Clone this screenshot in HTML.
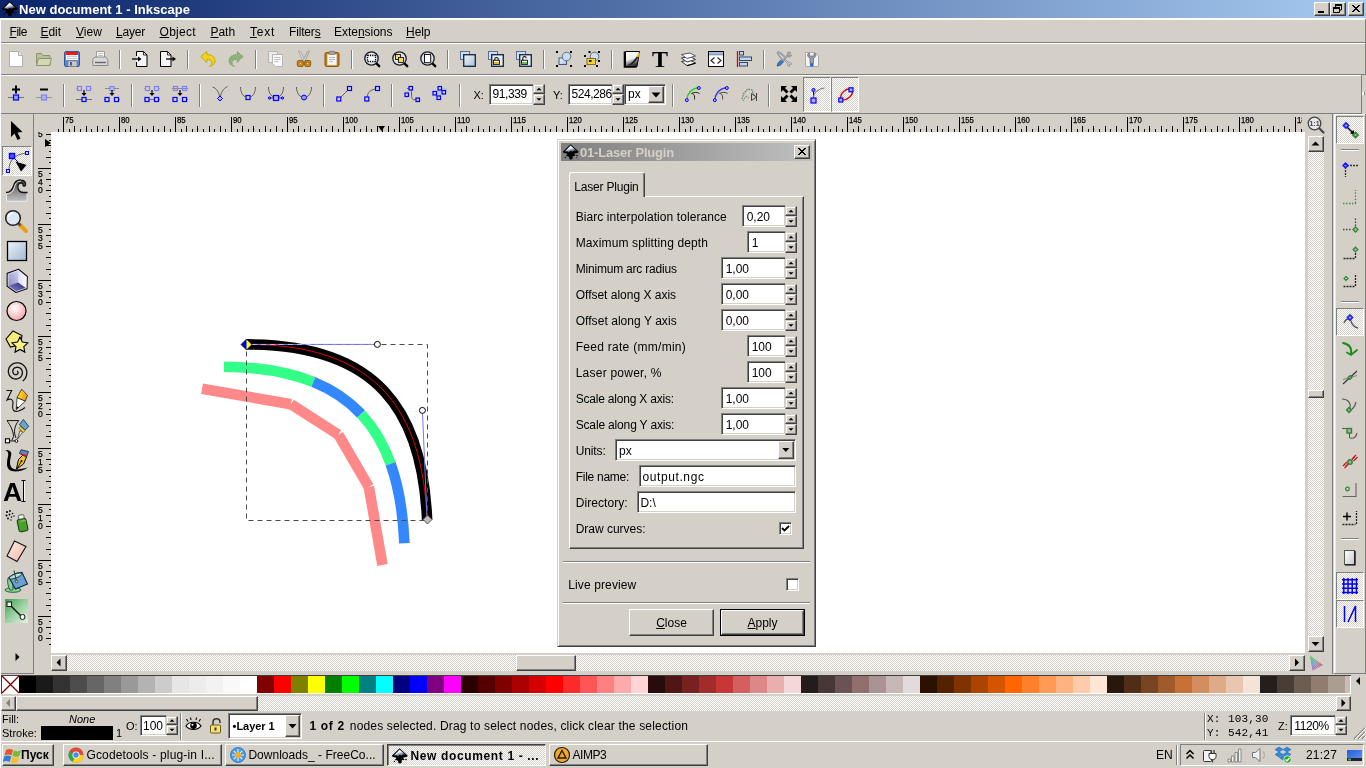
<!DOCTYPE html><html><head><meta charset="utf-8"><title>New document 1 - Inkscape</title><style>
html,body{margin:0;padding:0;}
body{width:1366px;height:768px;overflow:hidden;background:#d4d0c8;position:relative;font-family:"Liberation Sans",sans-serif;font-size:12px;color:#000;}
.a{position:absolute;}
.t{position:absolute;white-space:nowrap;line-height:14px;}
u{text-decoration:underline;}
.sunk{position:absolute;background:#fff;box-sizing:border-box;border:1px solid;border-color:#808080 #fff #fff #808080;box-shadow:inset 1px 1px 0 #404040, inset -1px -1px 0 #d4d0c8;}
.btn{position:absolute;background:#d4d0c8;box-sizing:border-box;border:1px solid;border-color:#fff #404040 #404040 #fff;box-shadow:inset -1px -1px 0 #808080, inset 1px 1px 0 #d4d0c8;}
.btn2{position:absolute;background:#d4d0c8;box-sizing:border-box;border:1px solid;border-color:#d4d0c8 #404040 #404040 #d4d0c8;box-shadow:inset -1px -1px 0 #808080, inset 1px 1px 0 #fff;}
.chk{background-color:#d4d0c8;background-image:conic-gradient(#fff 25%,#d4d0c8 0 50%,#fff 0 75%,#d4d0c8 0);background-size:2px 2px;}
.hsep{position:absolute;left:0;width:1366px;height:1px;}
.vsep{position:absolute;width:2px;border-left:1px solid #808080;border-right:1px solid #fff;box-sizing:border-box;}
svg{position:absolute;overflow:visible;}
</style></head><body><div id="w" style="position:absolute;left:0;top:0;width:1366px;height:768px;will-change:transform">
<svg width="0" height="0" style="left:0;top:0"><defs><linearGradient id="dg" x1="0" y1="0" x2="1" y2="1"><stop offset="0" stop-color="#f2f6fb"/><stop offset="1" stop-color="#a9c0dc"/></linearGradient><linearGradient id="ilg" x1=".2" y1="0" x2=".7" y2="1"><stop offset="0" stop-color="#fff"/><stop offset=".45" stop-color="#e8eef6"/><stop offset=".8" stop-color="#5a6b86"/><stop offset="1" stop-color="#111"/></linearGradient></defs></svg>
<div class="a" style="left:0px;top:0px;width:1366px;height:18px;background:linear-gradient(90deg,#0a246a,#a6caf0);"></div>
<div class="a" style="left:0px;top:18px;width:1366px;height:2px;background:#fff;"></div>
<div class="a" style="left:0px;top:18px;width:1px;height:750px;background:#fff;"></div>
<div class="a" style="left:1365px;top:19px;width:1px;height:56px;background:#808080;"></div>
<div class="a" style="left:1365px;top:114px;width:1px;height:560px;background:#808080;"></div>
<svg style="left:2px;top:1px" width="16" height="16" viewBox="0 0 16 16"><path d="M7.600 .2L15.600 7.600Q15.800 8.700 14.300 9L11.600 9.600Q10.800 10.300 11.800 10.800L12.500 11.300Q12.300 12.100 11 12L9.800 12.300Q9 13 10 13.700Q9.300 15.600 7.600 15.600Q5.800 15.400 6.200 13.800Q6.600 12.800 5.400 12.600L3.400 12Q2.600 11.300 4 10.800Q4.800 10.200 3.800 9.600L1.200 9Q-.3 8.700 0 7.600Z" fill="#000"/><path d="M7.600 1.400L14 7.200L11.400 6.600L9.600 8L7.800 6.800L5.800 8.200L4.200 7.200L1.800 7.600Z" fill="url(#ilg)"/><circle cx="14" cy="11.500" r=".8" fill="#000"/><circle cx="2.400" cy="13.400" r=".7" fill="#000"/><circle cx="13.500" cy="13.800" r=".5" fill="#000"/></svg>
<div class="t" style="left:19px;top:2px;font-weight:bold;font-size:13px;color:#fff;letter-spacing:0.02px;line-height:15px">New document 1 - Inkscape</div>
<div class="btn" style="left:1314px;top:2px;width:16px;height:14px;"></div>
<div class="a" style="left:1318px;top:11px;width:6px;height:2px;background:#000;"></div>
<div class="btn" style="left:1330px;top:2px;width:16px;height:14px;"></div>
<svg style="left:1330px;top:2px" width="16" height="14" viewBox="0 0 16 14"><path d="M5.5 2.5h6v1h-6zM5.5 2.5v3M11.5 2.5v5.5h-2" fill="none" stroke="#000" stroke-width="1"/><path d="M5 2h7v2H5z" fill="#000"/><path d="M3.5 6.5h6v4h-6z" fill="none" stroke="#000"/><path d="M3 5h7v2H3z" fill="#000"/></svg>
<div class="btn" style="left:1348px;top:2px;width:16px;height:14px;"></div>
<svg style="left:1348px;top:2px" width="16" height="14" viewBox="0 0 16 14"><path d="M4 3l7 7M5 3l7 7M11 3l-7 7M12 3l-7 7" stroke="#000" stroke-width="1" fill="none"/></svg>
<div class="t" style="left:9.5px;top:25px;font-size:12px;letter-spacing:-0.459px;"><u>F</u>ile</div>
<div class="t" style="left:40.5px;top:25px;font-size:12px;letter-spacing:-0.045px;"><u>E</u>dit</div>
<div class="t" style="left:76px;top:25px;font-size:12px;letter-spacing:0.052px;"><u>V</u>iew</div>
<div class="t" style="left:116px;top:25px;font-size:12px;letter-spacing:-0.203px;"><u>L</u>ayer</div>
<div class="t" style="left:159.5px;top:25px;font-size:12px;letter-spacing:0.303px;"><u>O</u>bject</div>
<div class="t" style="left:210.5px;top:25px;font-size:12px;letter-spacing:-0.046px;"><u>P</u>ath</div>
<div class="t" style="left:250px;top:25px;font-size:12px;letter-spacing:0.748px;"><u>T</u>ext</div>
<div class="t" style="left:289px;top:25px;font-size:12px;letter-spacing:-0.167px;">Filter<u>s</u></div>
<div class="t" style="left:334px;top:25px;font-size:12px;letter-spacing:-0.020px;">Exte<u>n</u>sions</div>
<div class="t" style="left:406px;top:25px;font-size:12px;letter-spacing:-0.045px;"><u>H</u>elp</div>
<div class="a" style="left:1px;top:42px;width:1364px;height:1px;background:#808080;"></div>
<div class="a" style="left:1px;top:43px;width:1364px;height:1px;background:#fff;"></div>
<div class="a" style="left:1px;top:74px;width:1364px;height:1px;background:#808080;"></div>
<div class="a" style="left:1px;top:75px;width:1360px;height:1px;background:#fff;"></div>
<div class="a" style="left:1px;top:113px;width:1361px;height:1px;background:#808080;"></div>
<svg style="left:8px;top:51px" width="16" height="16" viewBox="0 0 16 16"><path d="M1.5 .5h9l4 4v11h-13z" fill="#fff" stroke="#b0b0b0"/><path d="M10.5 .5v4h4" fill="#eee" stroke="#b0b0b0"/></svg>
<svg style="left:36px;top:51px" width="16" height="16" viewBox="0 0 16 16"><path d="M.5 14.5v-12h5l1.5 2h7v10z" fill="#b9bf96" stroke="#8e9470"/><path d="M.5 14.5l2-7h13l-2 7z" fill="#d3d8b4" stroke="#8e9470"/></svg>
<svg style="left:64px;top:51px" width="16" height="16" viewBox="0 0 16 16"><rect x=".5" y=".5" width="15" height="15" rx="1.5" fill="#5b8bd6" stroke="#2c5aa0"/><rect x="2" y="1" width="12" height="3" fill="#e41f1f"/><rect x="2" y="4" width="12" height="5" fill="#f4f4f4"/><path d="M3 5.5h10M3 7.5h10" stroke="#ccc"/><rect x="4" y="10" width="9" height="5.5" fill="#c9c9c9" stroke="#777" stroke-width=".6"/><rect x="6" y="11" width="2" height="3.5" fill="#3a5f9e"/></svg>
<svg style="left:92px;top:51px" width="16" height="16" viewBox="0 0 16 16"><path d="M4.5 6.5v-6h8v6" fill="#fff" stroke="#999"/><path d="M6 2.5h5M6 4.500h5" stroke="#bbb"/><path d="M.8 14.500v-6l2-2.500h11l2 2.500v6z" fill="#d9d9d9" stroke="#8a8a8a"/><path d="M3 11.500h11" stroke="#666" stroke-width="1.4"/></svg>
<div class="a" style="left:119px;top:50px;width:1px;height:19px;background:#808080;"></div>
<div class="a" style="left:120px;top:50px;width:1px;height:19px;background:#fff;"></div>
<svg style="left:132px;top:51px" width="16" height="16" viewBox="0 0 16 16"><path d="M4.500 .5h7l3.500 3.500v11.500h-10.500z" fill="#f4f4f4"/><path d="M4.500 5v-4.500h7l3.500 3.500v11.500h-10.500v-4.500" fill="none" stroke="#000"/><path d="M11.500 .5v3.500h3.500" fill="none" stroke="#000" stroke-width=".8"/><path d="M0 8h7" stroke="#000" stroke-width="1.3"/><path d="M6 5.500l3.500 2.500-3.500 2.500z" fill="#000"/></svg>
<svg style="left:160px;top:51px" width="16" height="16" viewBox="0 0 16 16"><path d="M.5 .5h7l3.500 3.500v11.500h-10.500z" fill="#f4f4f4" stroke="#000"/><path d="M7.500 .5v3.500h3.500" fill="none" stroke="#000" stroke-width=".8"/><path d="M6 8h8" stroke="#000" stroke-width="1.3"/><path d="M12.500 5.500l3.500 2.500-3.500 2.500z" fill="#000"/></svg>
<div class="a" style="left:187px;top:50px;width:1px;height:19px;background:#808080;"></div>
<div class="a" style="left:188px;top:50px;width:1px;height:19px;background:#fff;"></div>
<svg style="left:200px;top:51px" width="16" height="16" viewBox="0 0 16 16"><path d="M.8 5.500l6-5v3c5 0 8.500 2.500 8.200 7-.3 2.500-2.500 4.500-5.500 4.800 2-1.300 2.800-2.800 2.300-4.500-.6-1.800-2.500-2.300-5-2.300v3z" fill="#f3d21d" stroke="#c4a000" stroke-width=".9"/></svg>
<svg style="left:228px;top:51px" width="16" height="16" viewBox="0 0 16 16"><path d="M15.200 5.500l-6-5v3c-5 0-8.500 2.500-8.200 7 .3 2.500 2.500 4.500 5.500 4.800-2-1.300-2.800-2.800-2.300-4.500.6-1.800 2.500-2.300 5-2.300v3z" fill="#8fb27a" stroke="#6a9456" stroke-width=".9" stroke-dasharray="1 1"/></svg>
<div class="a" style="left:255px;top:50px;width:1px;height:19px;background:#808080;"></div>
<div class="a" style="left:256px;top:50px;width:1px;height:19px;background:#fff;"></div>
<svg style="left:268px;top:51px" width="16" height="16" viewBox="0 0 16 16"><path d="M.5 .5h9v11h-9z" fill="#ececec" stroke="#b5b5b5"/><path d="M4.500 3.500h10v12h-7l-3-3z" fill="#fafafa" stroke="#b5b5b5"/><path d="M6.500 6.500h6M6.500 8.500h6M6.500 10.500h4" stroke="#bbb"/></svg>
<svg style="left:296px;top:51px" width="16" height="16" viewBox="0 0 16 16"><path d="M2.500 .3l2 .2 5 9.500-2 1z" fill="#e4e4e4" stroke="#909090" stroke-width=".7"/><path d="M13.500 .3l-2 .2-5 9.500 2 1z" fill="#d0d0d0" stroke="#909090" stroke-width=".7"/><rect x="1.300" y="9.500" width="6" height="6" rx="1.500" fill="#d38a2a" stroke="#8f5902"/><rect x="8.700" y="9.500" width="6" height="6" rx="1.500" fill="#d38a2a" stroke="#8f5902"/><rect x="3.300" y="11.500" width="2.200" height="2.200" fill="#f3d9b0" stroke="#8f5902" stroke-width=".5"/><rect x="10.600" y="11.500" width="2.200" height="2.200" fill="#f3d9b0" stroke="#8f5902" stroke-width=".5"/></svg>
<svg style="left:324px;top:51px" width="16" height="16" viewBox="0 0 16 16"><rect x="1" y="1.500" width="14" height="14" rx="1.500" fill="#c17d11" stroke="#8f5902"/><rect x="3.500" y="3.500" width="9" height="10.500" fill="#f6f6f6" stroke="#ddd" stroke-width=".6"/><rect x="5" y=".3" width="6" height="3" rx="1" fill="#aaa" stroke="#666" stroke-width=".7"/><path d="M5 6.500h6M5 8.500h6M5 10.500h4" stroke="#bbb"/></svg>
<div class="a" style="left:351px;top:50px;width:1px;height:19px;background:#808080;"></div>
<div class="a" style="left:352px;top:50px;width:1px;height:19px;background:#fff;"></div>
<svg style="left:364px;top:51px" width="16" height="16" viewBox="0 0 16 16"><path d="M11 11l4.200 4.200" stroke="#000" stroke-width="2.400" stroke-linecap="round"/><circle cx="7.500" cy="7.500" r="6.700" fill="#d7e3f1" stroke="#1a1a1a" stroke-width="1.300"/><rect x="3.500" y="4.500" width="8" height="6" fill="#fff" stroke="#000" stroke-width="1.300" stroke-dasharray="1.300 1"/></svg>
<svg style="left:392px;top:51px" width="16" height="16" viewBox="0 0 16 16"><path d="M11 11l4.200 4.200" stroke="#000" stroke-width="2.400" stroke-linecap="round"/><circle cx="7.500" cy="7.500" r="6.700" fill="#d7e3f1" stroke="#1a1a1a" stroke-width="1.300"/><rect x="3.500" y="3.500" width="5" height="5" fill="#f6d95a" stroke="#000" stroke-width=".8"/><rect x="6.500" y="6.500" width="5" height="5" fill="#f6d95a" stroke="#000" stroke-width=".8"/></svg>
<svg style="left:420px;top:51px" width="16" height="16" viewBox="0 0 16 16"><path d="M11 11l4.200 4.200" stroke="#000" stroke-width="2.400" stroke-linecap="round"/><circle cx="7.500" cy="7.500" r="6.700" fill="#d7e3f1" stroke="#1a1a1a" stroke-width="1.300"/><rect x="4.500" y="3.500" width="6" height="8" fill="#fff" stroke="#000" stroke-width=".9"/><path d="M10.800 4.500v7.300h-5.500" stroke="#555" fill="none"/></svg>
<div class="a" style="left:447px;top:50px;width:1px;height:19px;background:#808080;"></div>
<div class="a" style="left:448px;top:50px;width:1px;height:19px;background:#fff;"></div>
<svg style="left:460px;top:51px" width="16" height="16" viewBox="0 0 16 16"><rect x=".5" y=".5" width="9" height="8" fill="#cddcef" stroke="#5a6f94"/><rect x="3.700" y="3.700" width="11.600" height="11.600" fill="url(#dg)" stroke="#1f2d4a" stroke-width="1.400"/></svg>
<svg style="left:488px;top:51px" width="16" height="16" viewBox="0 0 16 16"><rect x=".5" y=".5" width="9" height="8" fill="#cddcef" stroke="#5a6f94"/><rect x="3.700" y="3.700" width="11.600" height="11.600" fill="#e6eef8" stroke="#1f2d4a" stroke-width="1.400"/><path d="M6.800 9.500v-1.300c0-2.300 3.400-2.300 3.400 0v1.300" fill="none" stroke="#111" stroke-width="1.100"/><rect x="5.500" y="9.300" width="6" height="4.200" fill="#fff" stroke="#111" stroke-width=".9"/><rect x="6" y="11" width="5" height="2.100" fill="#f2b61e"/></svg>
<svg style="left:516px;top:51px" width="16" height="16" viewBox="0 0 16 16"><rect x=".5" y=".5" width="9" height="8" fill="#cddcef" stroke="#5a6f94"/><rect x="3.700" y="3.700" width="11.600" height="11.600" fill="#e6eef8" stroke="#1f2d4a" stroke-width="1.400"/><path d="M6.800 9.500v-2.300c0-2.300 3.400-2.300 3.400 0" fill="none" stroke="#111" stroke-width="1.100"/><rect x="5.500" y="9.300" width="6" height="4.200" fill="#fff" stroke="#111" stroke-width=".9"/><rect x="6" y="11" width="5" height="2.100" fill="#6cc04a"/></svg>
<div class="a" style="left:543px;top:50px;width:1px;height:19px;background:#808080;"></div>
<div class="a" style="left:544px;top:50px;width:1px;height:19px;background:#fff;"></div>
<svg style="left:556px;top:51px" width="16" height="16" viewBox="0 0 16 16"><path d="M0 0h2v2h-2zM14 0h2v2h-2zM0 14h2v2h-2zM14 14h2v2h-2z" fill="#000"/><rect x="3" y="7" width="7.500" height="6.500" fill="url(#dg)" stroke="#44587c"/><circle cx="10.500" cy="5.500" r="4.300" fill="#cfdced" stroke="#5a6a8a"/></svg>
<svg style="left:584px;top:51px" width="16" height="16" viewBox="0 0 16 16"><path d="M4.500 0h2v2h-2zM14 0h2v2h-2zM0 4h2v2h-2zM14 9h2v2h-2zM0 14h2v2h-2zM12 14h2v2h-2z" fill="#000"/><circle cx="10.500" cy="5.500" r="4.300" fill="#cfdced" stroke="#5a6a8a"/><rect x="3" y="7.500" width="8.500" height="6" fill="#f4d03a" stroke="#7a6410" stroke-width=".9"/><rect x="5" y="9" width="2.500" height="2" fill="#222"/></svg>
<div class="a" style="left:611px;top:50px;width:1px;height:19px;background:#808080;"></div>
<div class="a" style="left:612px;top:50px;width:1px;height:19px;background:#fff;"></div>
<svg style="left:624px;top:51px" width="16" height="16" viewBox="0 0 16 16"><defs><linearGradient id="fg" x1="0" y1="0" x2="0.300" y2="1"><stop offset="0" stop-color="#fff"/><stop offset=".55" stop-color="#eee"/><stop offset="1" stop-color="#333"/></linearGradient></defs><path d="M1.500 .5h14l-2.500 15h-11.500z" fill="url(#fg)" stroke="#000" stroke-width="1"/><path d="M.5 .5v15.500h12" fill="none" stroke="#000" stroke-width="1.600"/><path d="M2.500 14.500c3-.5 8-5 10.500-9.500l1.500 1c-3 5.500-7 9-12 8.500z" fill="#222"/><path d="M12.500 5.500l2.500-4 1.300 1-2 4z" fill="#f5b800"/></svg>
<svg style="left:652px;top:51px" width="16" height="16" viewBox="0 0 16 16"><text x="8" y="16" text-anchor="middle" font-family="Liberation Serif,serif" font-weight="bold" font-size="24" fill="#000" textLength="16" lengthAdjust="spacingAndGlyphs">T</text></svg>
<svg style="left:680px;top:51px" width="16" height="16" viewBox="0 0 16 16"><path d="M1.500 10.500l8.500-1.500 5.500 3-8.500 2.500z" fill="#fff" stroke="#333" stroke-width="1"/><path d="M1.500 7l8.500-1.500 5.500 3-8.500 2.500z" fill="#fff" stroke="#333" stroke-width="1"/><path d="M1.500 3.500l8.500-1.500 5.500 3-8.500 2.500z" fill="#fff" stroke="#555" stroke-width="1"/><path d="M7 14.800l8.500-2.600" stroke="#000" stroke-width="1.200"/></svg>
<svg style="left:708px;top:51px" width="16" height="16" viewBox="0 0 16 16"><rect x=".5" y=".5" width="15" height="15" fill="#fff" stroke="#000"/><rect x="1" y="1" width="14" height="2.500" fill="#9dbce6"/><path d="M1 3.800h14" stroke="#555" stroke-width=".7"/><path d="M6.500 6.500l-3.500 3 3.500 3M9.500 6.500l3.500 3-3.500 3" fill="none" stroke="#333" stroke-width="1.300"/></svg>
<svg style="left:736px;top:51px" width="16" height="16" viewBox="0 0 16 16"><path d="M1.500 0v16" stroke="#d40000" stroke-width="1.300"/><rect x="3.500" y=".5" width="4" height="3.500" fill="#c5d6ec" stroke="#33466a"/><rect x="3.500" y="6" width="12" height="3.500" fill="#c5d6ec" stroke="#33466a"/><rect x="3.500" y="11.500" width="8" height="3.500" fill="#c5d6ec" stroke="#33466a"/></svg>
<div class="a" style="left:763px;top:50px;width:1px;height:19px;background:#808080;"></div>
<div class="a" style="left:764px;top:50px;width:1px;height:19px;background:#fff;"></div>
<svg style="left:776px;top:51px" width="16" height="16" viewBox="0 0 16 16"><path d="M4 12.500L13 3" stroke="#9aa0a8" stroke-width="2.200"/><path d="M11.500 1.500c1.500-1 3-.5 3.500.5l-2 1 .5 1.500 2-.5c0 1.500-1.500 2.500-3 2z" fill="#b8bec6" stroke="#777" stroke-width=".6"/><path d="M1 15.200l1-3.500 3.500-3 2 2-3 3.500z" fill="#3b78c8" stroke="#1a4a90" stroke-width=".6"/><path d="M6.500 9.500L3 4.500 1.500 2l1-1 2.500 1.500 4.500 4" fill="none" stroke="#9aa0a8" stroke-width="1.800"/><path d="M9 8l3.500 3.500c1.500-.5 3 .5 3 2l-1.500-.5-1 1 .5 1.500c-1.500 0-2.500-1.500-2-3l-3.500-3.500z" fill="#c8ccd2" stroke="#777" stroke-width=".6"/></svg>
<svg style="left:804px;top:51px" width="16" height="16" viewBox="0 0 16 16"><path d="M1.500 1.500h9.500l3.500 3.500v10.500h-13z" fill="#f4f4f4" stroke="#aaa"/><path d="M4 2.500c-1 2 0 4 2 4.500v5.500h3.500v-5.500c2-.5 3-2.500 2-4.500l-1.500 0v2.500h-4.500v-2.500z" fill="#9aa0a8" stroke="#666" stroke-width=".7"/><path d="M6 12.500h3.500v3h-3.500z" fill="#2a6ad0"/></svg>
<svg style="left:8px;top:86px" width="16" height="16" viewBox="0 0 16 16"><path d="M4 3.500h8M8 -.5v8" stroke="#000" stroke-width="2"/><path d="M0 11.500h16" stroke="#555" stroke-width=".8"/><rect x="5.5" y="9" width="5" height="5" fill="#9a9ae8" stroke="#0000ff" stroke-width="1.2"/></svg>
<svg style="left:36px;top:86px" width="16" height="16" viewBox="0 0 16 16"><path d="M4 3.500h8" stroke="#000" stroke-width="2"/><path d="M0 11.500h16" stroke="#888" stroke-width=".8"/><rect x="5.5" y="9" width="5" height="5" fill="#b0b0ee" stroke="#8080ff" stroke-width="1.2"/></svg>
<div class="a" style="left:63px;top:84px;width:1px;height:23px;background:#808080;"></div>
<div class="a" style="left:64px;top:84px;width:1px;height:23px;background:#fff;"></div>
<svg style="left:76px;top:86px" width="16" height="16" viewBox="0 0 16 16"><path d="M0 2.500h1.500M14.500 2.500h1.500" stroke="#999" stroke-width=".8"/><rect x="1.5" y="0.5" width="4" height="4" fill="none" stroke="#8080ff" stroke-width="1.2"/><rect x="10.5" y="0.5" width="4" height="4" fill="none" stroke="#8080ff" stroke-width="1.2"/><path d="M8 4v4" stroke="#000" stroke-width="1.200"/><path d="M5.500 7h5l-2.500 3z" fill="#000"/><path d="M0 13.500h16" stroke="#555" stroke-width=".8"/><rect x="6" y="11.5" width="4" height="4" fill="#d4d0c8" stroke="#0000ff" stroke-width="1.2"/></svg>
<svg style="left:104px;top:86px" width="16" height="16" viewBox="0 0 16 16"><path d="M1 2.500h14" stroke="#777" stroke-width=".8"/><rect x="6" y="0.5" width="4" height="4" fill="#c0c0f0" stroke="#8080ff" stroke-width="1.2"/><path d="M8 4v4" stroke="#000" stroke-width="1.200"/><path d="M5.500 7h5l-2.500 3z" fill="#000"/><path d="M0 13.500h3M13 13.500h3" stroke="#555" stroke-width=".8"/><rect x="1" y="11.5" width="4" height="4" fill="#d4d0c8" stroke="#0000ff" stroke-width="1.2"/><rect x="10.5" y="11.5" width="4" height="4" fill="#d4d0c8" stroke="#0000ff" stroke-width="1.2"/></svg>
<div class="a" style="left:131px;top:84px;width:1px;height:23px;background:#808080;"></div>
<div class="a" style="left:132px;top:84px;width:1px;height:23px;background:#fff;"></div>
<svg style="left:144px;top:86px" width="16" height="16" viewBox="0 0 16 16"><path d="M0 2.500h1.500M14.500 2.500h1.500" stroke="#999" stroke-width=".8"/><rect x="1.5" y="0.5" width="4" height="4" fill="none" stroke="#8080ff" stroke-width="1.2"/><rect x="10.5" y="0.5" width="4" height="4" fill="none" stroke="#8080ff" stroke-width="1.2"/><path d="M8 4v4" stroke="#000" stroke-width="1.200"/><path d="M5.500 7h5l-2.500 3z" fill="#000"/><path d="M0 13.500h16" stroke="#555" stroke-width=".8"/><rect x="1" y="11.5" width="4" height="4" fill="#d4d0c8" stroke="#0000ff" stroke-width="1.2"/><rect x="10.5" y="11.5" width="4" height="4" fill="#d4d0c8" stroke="#0000ff" stroke-width="1.2"/></svg>
<svg style="left:172px;top:86px" width="16" height="16" viewBox="0 0 16 16"><path d="M0 2.500h16" stroke="#777" stroke-width=".8"/><rect x="1.5" y="0.5" width="4" height="4" fill="none" stroke="#8080ff" stroke-width="1.2"/><rect x="10.5" y="0.5" width="4" height="4" fill="none" stroke="#8080ff" stroke-width="1.2"/><path d="M8 4v4" stroke="#000" stroke-width="1.200"/><path d="M5.500 7h5l-2.500 3z" fill="#000"/><path d="M0 13.500h3M13 13.500h3" stroke="#555" stroke-width=".8"/><rect x="1" y="11.5" width="4" height="4" fill="#d4d0c8" stroke="#0000ff" stroke-width="1.2"/><rect x="10.5" y="11.5" width="4" height="4" fill="#d4d0c8" stroke="#0000ff" stroke-width="1.2"/></svg>
<div class="a" style="left:199px;top:84px;width:1px;height:23px;background:#808080;"></div>
<div class="a" style="left:200px;top:84px;width:1px;height:23px;background:#fff;"></div>
<svg style="left:212px;top:86px" width="16" height="16" viewBox="0 0 16 16"><path d="M.5 1c4 1 7 6 7.500 11.500 1-6 3-10 7.500-12" fill="none" stroke="#555" stroke-width=".9"/><path d="M8 10l2.500 2.500-2.500 2.500-2.500-2.500z" fill="#b0b0ee" stroke="#0000ff"/></svg>
<svg style="left:240px;top:86px" width="16" height="16" viewBox="0 0 16 16"><path d="M.5 1c0 14 15 14 15 0" fill="none" stroke="#555" stroke-width=".9"/><rect x="6" y="9.5" width="4" height="4" fill="#d4d0c8" stroke="#0000ff" stroke-width="1.2"/></svg>
<svg style="left:268px;top:86px" width="16" height="16" viewBox="0 0 16 16"><path d="M.5 1c0 14 15 14 15 0" fill="none" stroke="#555" stroke-width=".9"/><path d="M1 12h14" stroke="#0000ff" stroke-width=".8"/><circle cx="1.500" cy="12" r="1.200" fill="none" stroke="#0000ff"/><circle cx="14.500" cy="12" r="1.200" fill="none" stroke="#0000ff"/><rect x="5.5" y="9.5" width="5" height="5" fill="#b0b0ee" stroke="#0000ff" stroke-width="1.2"/></svg>
<svg style="left:296px;top:86px" width="16" height="16" viewBox="0 0 16 16"><path d="M.5 1c0 14 15 14 15 0" fill="none" stroke="#555" stroke-width=".9"/><circle cx="8" cy="11.500" r="2.500" fill="#9a9ae8" stroke="#0000ff"/></svg>
<div class="a" style="left:323px;top:84px;width:1px;height:23px;background:#808080;"></div>
<div class="a" style="left:324px;top:84px;width:1px;height:23px;background:#fff;"></div>
<svg style="left:336px;top:86px" width="16" height="16" viewBox="0 0 16 16"><path d="M3 13l10-10" stroke="#555" stroke-width=".9"/><rect x="0.8" y="11" width="4" height="4" fill="#d4d0c8" stroke="#0000ff" stroke-width="1.2"/><rect x="11.5" y="0.5" width="4" height="4" fill="#d4d0c8" stroke="#0000ff" stroke-width="1.2"/></svg>
<svg style="left:364px;top:86px" width="16" height="16" viewBox="0 0 16 16"><path d="M3 13c0-7 4-10 10-10" fill="none" stroke="#555" stroke-width=".9"/><rect x="0.8" y="11" width="4" height="4" fill="#d4d0c8" stroke="#0000ff" stroke-width="1.2"/><rect x="11.5" y="0.5" width="4" height="4" fill="#d4d0c8" stroke="#0000ff" stroke-width="1.2"/></svg>
<div class="a" style="left:391px;top:84px;width:1px;height:23px;background:#808080;"></div>
<div class="a" style="left:392px;top:84px;width:1px;height:23px;background:#fff;"></div>
<svg style="left:404px;top:86px" width="16" height="16" viewBox="0 0 16 16"><path d="M3 2.500c9-3 0 14 9 11" fill="none" stroke="#555" stroke-width=".9"/><rect x="5" y="0.5" width="3.5" height="3.5" fill="#d4d0c8" stroke="#0000ff" stroke-width="1.2"/><rect x="1" y="7" width="3.5" height="3.5" fill="#d4d0c8" stroke="#0000ff" stroke-width="1.2"/><rect x="12" y="12" width="3.5" height="3.5" fill="#d4d0c8" stroke="#0000ff" stroke-width="1.2"/></svg>
<svg style="left:432px;top:86px" width="16" height="16" viewBox="0 0 16 16"><path d="M3 11l2-7 6-3 4 2v4h-5l-2 5z" fill="#b9c4d8"/><rect x="6" y="0.5" width="3.5" height="3.5" fill="#d4d0c8" stroke="#0000ff" stroke-width="1.2"/><rect x="1" y="5.5" width="3.5" height="3.5" fill="#d4d0c8" stroke="#0000ff" stroke-width="1.2"/><rect x="10" y="4.5" width="3.5" height="3.5" fill="#d4d0c8" stroke="#0000ff" stroke-width="1.2"/><rect x="5" y="10" width="3.5" height="3.5" fill="#d4d0c8" stroke="#0000ff" stroke-width="1.2"/></svg>
<div class="a" style="left:459px;top:84px;width:1px;height:23px;background:#808080;"></div>
<div class="a" style="left:460px;top:84px;width:1px;height:23px;background:#fff;"></div>
<div class="t" style="left:473.5px;top:88px;font-size:11px">X:</div>
<div class="sunk" style="left:489px;top:84px;width:45px;height:21px;"></div>
<div class="t" style="left:492.6px;top:87px;font-size:12px;letter-spacing:-0.434px;">91,339</div>
<div class="btn2" style="left:533px;top:84px;width:12px;height:10px;"></div>
<div class="btn2" style="left:533px;top:94px;width:12px;height:11px;"></div>
<svg style="left:533px;top:84px" width="12" height="21" viewBox="0 0 12 21"><path d="M3.5 6.2l2.500-2.500 2.500 2.500z" fill="#000"/><path d="M3.5 14.3l2.500 2.500 2.500-2.500z" fill="#000"/></svg>
<div class="t" style="left:553px;top:88px;font-size:11px">Y:</div>
<div class="sunk" style="left:568px;top:84px;width:45px;height:21px;overflow:hidden"><div class="t" style="left:2.500px;top:2px;font-size:12px;letter-spacing:-0.434px;">524,286</div></div>
<div class="btn2" style="left:612px;top:84px;width:12px;height:10px;"></div>
<div class="btn2" style="left:612px;top:94px;width:12px;height:11px;"></div>
<svg style="left:612px;top:84px" width="12" height="21" viewBox="0 0 12 21"><path d="M3.5 6.2l2.500-2.500 2.500 2.500z" fill="#000"/><path d="M3.5 14.3l2.500 2.500 2.500-2.500z" fill="#000"/></svg>
<div class="sunk" style="left:624px;top:84px;width:42px;height:21px;"></div>
<div class="t" style="left:628px;top:87px;font-size:12px">px</div>
<div class="btn" style="left:648px;top:86px;width:16px;height:17px;"></div>
<svg style="left:648px;top:86px" width="16" height="17" viewBox="0 0 16 17"><path d="M3.500 6.500h9l-4.500 5z" fill="#000"/></svg>
<div class="a" style="left:672px;top:84px;width:1px;height:23px;background:#808080;"></div>
<div class="a" style="left:673px;top:84px;width:1px;height:23px;background:#fff;"></div>
<svg style="left:685px;top:86px" width="16" height="16" viewBox="0 0 16 16"><path d="M1.500 14.500c1-7 5-12 12-13" fill="none" stroke="#22cc22" stroke-width="1.300"/><path d="M6.500 7.500c2.500 0 3.500 2.500 3 6M6.500 7.500c2.500-1.500 6-1.500 8 0" fill="none" stroke="#222" stroke-width="1"/><circle cx="1.800" cy="14.200" r="1.500" fill="#aaf" stroke="#00f"/><circle cx="13.800" cy="2" r="1.500" fill="#aaf" stroke="#00f"/></svg>
<svg style="left:713px;top:86px" width="16" height="16" viewBox="0 0 16 16"><path d="M6.500 7.500c2.500 0 3.500 2.500 3 6M6.500 7.500c2.500-1.500 6-1.500 8 0" fill="none" stroke="#444" stroke-width="1"/><path d="M1.500 14.500c1-7 5-12 12-13" fill="none" stroke="#3333ff" stroke-width="1.300"/><circle cx="1.800" cy="14.200" r="1.500" fill="#aaf" stroke="#00f"/><circle cx="13.800" cy="2" r="1.500" fill="#aaf" stroke="#00f"/></svg>
<svg style="left:741px;top:86px" width="16" height="16" viewBox="0 0 16 16"><path d="M1 13l2-6 4-4 4 1 2 6" fill="none" stroke="#4a7a4a" stroke-width="1.200" stroke-dasharray="1.500 1"/><path d="M10.500 7.500l5 3.500-5 3.500zM15.500 7v8" fill="none" stroke="#333" stroke-width=".9"/><path d="M2 15l3-5 3 2" fill="none" stroke="#666" stroke-dasharray="1 1"/></svg>
<div class="a" style="left:768px;top:84px;width:1px;height:23px;background:#808080;"></div>
<div class="a" style="left:769px;top:84px;width:1px;height:23px;background:#fff;"></div>
<svg style="left:781px;top:86px" width="16" height="16" viewBox="0 0 16 16"><path d="M0 0h6l-2 2 3.500 3.500-2 2-3.500-3.500-2 2zM16 0v6l-2-2-3.500 3.500-2-2 3.500-3.500-2-2zM0 16v-6l2 2 3.500-3.500 2 2-3.500 3.500 2 2zM16 16h-6l2-2-3.500-3.500 2-2 3.500 3.500 2-2z" fill="#000"/></svg>
<div class="a chk" style="left:803px;top:77px;width:28px;height:35px;box-sizing:border-box;border:1px solid;border-color:#808080 #fff #fff #808080"></div>
<div class="a chk" style="left:831px;top:77px;width:28px;height:35px;box-sizing:border-box;border:1px solid;border-color:#808080 #fff #fff #808080"></div>
<svg style="left:810px;top:87px" width="16" height="16" viewBox="0 0 16 16"><path d="M3.500 13v-9" stroke="#00f" stroke-width="1"/><path d="M3.500 11c0-5 4-9 11-10" fill="none" stroke="#777" stroke-width="1"/><circle cx="3.500" cy="3" r="1.600" fill="#88f" stroke="#00f"/><rect x="1" y="11" width="5" height="5" fill="#aaf" stroke="#00f" stroke-width="1.200"/></svg>
<svg style="left:838px;top:87px" width="16" height="16" viewBox="0 0 16 16"><path d="M3 13c-2-7 6-13 11-10 2 5-5 11-11 10z" fill="none" stroke="#e00000" stroke-width="1.400"/><rect x="11" y="0.8" width="4" height="4" fill="#aaf" stroke="#0000ff" stroke-width="1.2"/><rect x="0.8" y="11" width="4" height="4" fill="#aaf" stroke="#0000ff" stroke-width="1.2"/></svg>
<svg style="left:0px;top:0px" width="1366" height="768" viewBox="0 0 1366 768"><defs><clipPath id="rc"><rect x="34" y="114" width="1268" height="19"/></clipPath></defs><g clip-path="url(#rc)"><path d="M58.5 129V132M63.5 117V132M69.5 129V132M74.5 126V132M80.5 129V132M86.5 126V132M91.5 129V132M97.5 126V132M102.5 129V132M108.5 126V132M114.5 129V132M119.5 117V132M125.5 129V132M130.5 126V132M136.5 129V132M142.5 126V132M147.5 129V132M153.5 126V132M158.5 129V132M164.5 126V132M170.5 129V132M175.5 117V132M181.5 129V132M186.5 126V132M192.5 129V132M197.5 126V132M203.5 129V132M209.5 126V132M214.5 129V132M220.5 126V132M225.5 129V132M231.5 117V132M237.5 129V132M242.5 126V132M248.5 129V132M253.5 126V132M259.5 129V132M265.5 126V132M270.5 129V132M276.5 126V132M282.5 129V132M287.5 117V132M293.5 129V132M298.5 126V132M304.5 129V132M310.5 126V132M315.5 129V132M321.5 126V132M326.5 129V132M332.5 126V132M338.5 129V132M343.5 117V132M349.5 129V132M354.5 126V132M360.5 129V132M366.5 126V132M371.5 129V132M377.5 126V132M382.5 129V132M388.5 126V132M394.5 129V132M399.5 117V132M405.5 129V132M410.5 126V132M416.5 129V132M422.5 126V132M427.5 129V132M433.5 126V132M438.5 129V132M444.5 126V132M450.5 129V132M455.5 117V132M461.5 129V132M466.5 126V132M472.5 129V132M478.5 126V132M483.5 129V132M489.5 126V132M494.5 129V132M500.5 126V132M506.5 129V132M511.5 117V132M517.5 129V132M522.5 126V132M528.5 129V132M534.5 126V132M539.5 129V132M545.5 126V132M550.5 129V132M556.5 126V132M562.5 129V132M567.5 117V132M573.5 129V132M578.5 126V132M584.5 129V132M590.5 126V132M595.5 129V132M601.5 126V132M606.5 129V132M612.5 126V132M618.5 129V132M623.5 117V132M629.5 129V132M634.5 126V132M640.5 129V132M646.5 126V132M651.5 129V132M657.5 126V132M662.5 129V132M668.5 126V132M674.5 129V132M679.5 117V132M685.5 129V132M690.5 126V132M696.5 129V132M702.5 126V132M707.5 129V132M713.5 126V132M718.5 129V132M724.5 126V132M730.5 129V132M735.5 117V132M741.5 129V132M746.5 126V132M752.5 129V132M758.5 126V132M763.5 129V132M769.5 126V132M774.5 129V132M780.5 126V132M786.5 129V132M791.5 117V132M797.5 129V132M802.5 126V132M808.5 129V132M814.5 126V132M819.5 129V132M825.5 126V132M830.5 129V132M836.5 126V132M842.5 129V132M847.5 117V132M853.5 129V132M858.5 126V132M864.5 129V132M870.5 126V132M875.5 129V132M881.5 126V132M886.5 129V132M892.5 126V132M898.5 129V132M903.5 117V132M909.5 129V132M914.5 126V132M920.5 129V132M926.5 126V132M931.5 129V132M937.5 126V132M942.5 129V132M948.5 126V132M954.5 129V132M959.5 117V132M965.5 129V132M970.5 126V132M976.5 129V132M982.5 126V132M987.5 129V132M993.5 126V132M998.5 129V132M1004.5 126V132M1010.5 129V132M1015.5 117V132M1021.5 129V132M1026.5 126V132M1032.5 129V132M1038.5 126V132M1043.5 129V132M1049.5 126V132M1054.5 129V132M1060.5 126V132M1066.5 129V132M1071.5 117V132M1077.5 129V132M1082.5 126V132M1088.5 129V132M1093.5 126V132M1099.5 129V132M1105.5 126V132M1110.5 129V132M1116.5 126V132M1121.5 129V132M1127.5 117V132M1133.5 129V132M1138.5 126V132M1144.5 129V132M1149.5 126V132M1155.5 129V132M1161.5 126V132M1166.5 129V132M1172.5 126V132M1177.5 129V132M1183.5 117V132M1189.5 129V132M1194.5 126V132M1200.5 129V132M1205.5 126V132M1211.5 129V132M1217.5 126V132M1222.5 129V132M1228.5 126V132M1233.5 129V132M1239.5 117V132M1245.5 129V132M1250.5 126V132M1256.5 129V132M1261.5 126V132M1267.5 129V132M1273.5 126V132M1278.5 129V132M1284.5 126V132M1289.5 129V132M1295.5 117V132M1301.5 129V132" stroke="#000" stroke-width="1" fill="none"/><text x="65" y="122.500" font-size="8.500" stroke="#000" stroke-width=".25" font-family="Liberation Sans,sans-serif" textLength="8.6" lengthAdjust="spacingAndGlyphs">75</text><text x="121" y="122.500" font-size="8.500" stroke="#000" stroke-width=".25" font-family="Liberation Sans,sans-serif" textLength="8.6" lengthAdjust="spacingAndGlyphs">80</text><text x="177" y="122.500" font-size="8.500" stroke="#000" stroke-width=".25" font-family="Liberation Sans,sans-serif" textLength="8.6" lengthAdjust="spacingAndGlyphs">85</text><text x="233" y="122.500" font-size="8.500" stroke="#000" stroke-width=".25" font-family="Liberation Sans,sans-serif" textLength="8.6" lengthAdjust="spacingAndGlyphs">90</text><text x="289" y="122.500" font-size="8.500" stroke="#000" stroke-width=".25" font-family="Liberation Sans,sans-serif" textLength="8.6" lengthAdjust="spacingAndGlyphs">95</text><text x="345" y="122.500" font-size="8.500" stroke="#000" stroke-width=".25" font-family="Liberation Sans,sans-serif" textLength="12.9" lengthAdjust="spacingAndGlyphs">100</text><text x="401" y="122.500" font-size="8.500" stroke="#000" stroke-width=".25" font-family="Liberation Sans,sans-serif" textLength="12.9" lengthAdjust="spacingAndGlyphs">105</text><text x="457" y="122.500" font-size="8.500" stroke="#000" stroke-width=".25" font-family="Liberation Sans,sans-serif" textLength="12.9" lengthAdjust="spacingAndGlyphs">110</text><text x="513" y="122.500" font-size="8.500" stroke="#000" stroke-width=".25" font-family="Liberation Sans,sans-serif" textLength="12.9" lengthAdjust="spacingAndGlyphs">115</text><text x="569" y="122.500" font-size="8.500" stroke="#000" stroke-width=".25" font-family="Liberation Sans,sans-serif" textLength="12.9" lengthAdjust="spacingAndGlyphs">120</text><text x="625" y="122.500" font-size="8.500" stroke="#000" stroke-width=".25" font-family="Liberation Sans,sans-serif" textLength="12.9" lengthAdjust="spacingAndGlyphs">125</text><text x="681" y="122.500" font-size="8.500" stroke="#000" stroke-width=".25" font-family="Liberation Sans,sans-serif" textLength="12.9" lengthAdjust="spacingAndGlyphs">130</text><text x="737" y="122.500" font-size="8.500" stroke="#000" stroke-width=".25" font-family="Liberation Sans,sans-serif" textLength="12.9" lengthAdjust="spacingAndGlyphs">135</text><text x="793" y="122.500" font-size="8.500" stroke="#000" stroke-width=".25" font-family="Liberation Sans,sans-serif" textLength="12.9" lengthAdjust="spacingAndGlyphs">140</text><text x="849" y="122.500" font-size="8.500" stroke="#000" stroke-width=".25" font-family="Liberation Sans,sans-serif" textLength="12.9" lengthAdjust="spacingAndGlyphs">145</text><text x="905" y="122.500" font-size="8.500" stroke="#000" stroke-width=".25" font-family="Liberation Sans,sans-serif" textLength="12.9" lengthAdjust="spacingAndGlyphs">150</text><text x="961" y="122.500" font-size="8.500" stroke="#000" stroke-width=".25" font-family="Liberation Sans,sans-serif" textLength="12.9" lengthAdjust="spacingAndGlyphs">155</text><text x="1017" y="122.500" font-size="8.500" stroke="#000" stroke-width=".25" font-family="Liberation Sans,sans-serif" textLength="12.9" lengthAdjust="spacingAndGlyphs">160</text><text x="1073" y="122.500" font-size="8.500" stroke="#000" stroke-width=".25" font-family="Liberation Sans,sans-serif" textLength="12.9" lengthAdjust="spacingAndGlyphs">165</text><text x="1129" y="122.500" font-size="8.500" stroke="#000" stroke-width=".25" font-family="Liberation Sans,sans-serif" textLength="12.9" lengthAdjust="spacingAndGlyphs">170</text><text x="1185" y="122.500" font-size="8.500" stroke="#000" stroke-width=".25" font-family="Liberation Sans,sans-serif" textLength="12.9" lengthAdjust="spacingAndGlyphs">175</text><text x="1241" y="122.500" font-size="8.500" stroke="#000" stroke-width=".25" font-family="Liberation Sans,sans-serif" textLength="12.9" lengthAdjust="spacingAndGlyphs">180</text><text x="1297" y="122.500" font-size="8.500" stroke="#000" stroke-width=".25" font-family="Liberation Sans,sans-serif" textLength="12.9" lengthAdjust="spacingAndGlyphs">185</text></g><path d="M378 126h7l-3.500 5z" fill="#000"/></svg>
<svg style="left:0px;top:0px" width="1366" height="768" viewBox="0 0 1366 768"><defs><clipPath id="rv"><rect x="34" y="132" width="17" height="521"/></clipPath></defs><g clip-path="url(#rv)"><path d="M46 134.5H51M49 140.5H51M46 145.5H51M49 151.5H51M46 157.5H51M49 162.5H51M38 168.5H51M49 173.5H51M46 179.5H51M49 185.5H51M46 190.5H51M49 196.5H51M46 201.5H51M49 207.5H51M46 213.5H51M49 218.5H51M38 224.5H51M49 229.5H51M46 235.5H51M49 241.5H51M46 246.5H51M49 252.5H51M46 257.5H51M49 263.5H51M46 269.5H51M49 274.5H51M38 280.5H51M49 285.5H51M46 291.5H51M49 297.5H51M46 302.5H51M49 308.5H51M46 313.5H51M49 319.5H51M46 325.5H51M49 330.5H51M38 336.5H51M49 341.5H51M46 347.5H51M49 353.5H51M46 358.5H51M49 364.5H51M46 369.5H51M49 375.5H51M46 381.5H51M49 386.5H51M38 392.5H51M49 397.5H51M46 403.5H51M49 409.5H51M46 414.5H51M49 420.5H51M46 425.5H51M49 431.5H51M46 436.5H51M49 442.5H51M38 448.5H51M49 453.5H51M46 459.5H51M49 464.5H51M46 470.5H51M49 476.5H51M46 481.5H51M49 487.5H51M46 492.5H51M49 498.5H51M38 504.5H51M49 509.5H51M46 515.5H51M49 521.5H51M46 526.5H51M49 532.5H51M46 537.5H51M49 543.5H51M46 549.5H51M49 554.5H51M38 560.5H51M49 565.5H51M46 571.5H51M49 577.5H51M46 582.5H51M49 588.5H51M46 593.5H51M49 599.5H51M46 605.5H51M49 610.5H51M38 616.5H51M49 621.5H51M46 627.5H51M49 633.5H51M46 638.5H51M49 644.5H51" stroke="#000" stroke-width="1" fill="none"/><text x="38" y="137" font-size="8.500" stroke="#000" stroke-width=".25" font-family="Liberation Sans,sans-serif">5</text><text x="38" y="177" font-size="8.500" stroke="#000" stroke-width=".25" font-family="Liberation Sans,sans-serif">5</text><text x="38" y="185" font-size="8.500" stroke="#000" stroke-width=".25" font-family="Liberation Sans,sans-serif">4</text><text x="38" y="193" font-size="8.500" stroke="#000" stroke-width=".25" font-family="Liberation Sans,sans-serif">0</text><text x="38" y="233" font-size="8.500" stroke="#000" stroke-width=".25" font-family="Liberation Sans,sans-serif">5</text><text x="38" y="241" font-size="8.500" stroke="#000" stroke-width=".25" font-family="Liberation Sans,sans-serif">3</text><text x="38" y="249" font-size="8.500" stroke="#000" stroke-width=".25" font-family="Liberation Sans,sans-serif">5</text><text x="38" y="289" font-size="8.500" stroke="#000" stroke-width=".25" font-family="Liberation Sans,sans-serif">5</text><text x="38" y="297" font-size="8.500" stroke="#000" stroke-width=".25" font-family="Liberation Sans,sans-serif">3</text><text x="38" y="305" font-size="8.500" stroke="#000" stroke-width=".25" font-family="Liberation Sans,sans-serif">0</text><text x="38" y="345" font-size="8.500" stroke="#000" stroke-width=".25" font-family="Liberation Sans,sans-serif">5</text><text x="38" y="353" font-size="8.500" stroke="#000" stroke-width=".25" font-family="Liberation Sans,sans-serif">2</text><text x="38" y="361" font-size="8.500" stroke="#000" stroke-width=".25" font-family="Liberation Sans,sans-serif">5</text><text x="38" y="401" font-size="8.500" stroke="#000" stroke-width=".25" font-family="Liberation Sans,sans-serif">5</text><text x="38" y="409" font-size="8.500" stroke="#000" stroke-width=".25" font-family="Liberation Sans,sans-serif">2</text><text x="38" y="417" font-size="8.500" stroke="#000" stroke-width=".25" font-family="Liberation Sans,sans-serif">0</text><text x="38" y="457" font-size="8.500" stroke="#000" stroke-width=".25" font-family="Liberation Sans,sans-serif">5</text><text x="38" y="465" font-size="8.500" stroke="#000" stroke-width=".25" font-family="Liberation Sans,sans-serif">1</text><text x="38" y="473" font-size="8.500" stroke="#000" stroke-width=".25" font-family="Liberation Sans,sans-serif">5</text><text x="38" y="513" font-size="8.500" stroke="#000" stroke-width=".25" font-family="Liberation Sans,sans-serif">5</text><text x="38" y="521" font-size="8.500" stroke="#000" stroke-width=".25" font-family="Liberation Sans,sans-serif">1</text><text x="38" y="529" font-size="8.500" stroke="#000" stroke-width=".25" font-family="Liberation Sans,sans-serif">0</text><text x="38" y="569" font-size="8.500" stroke="#000" stroke-width=".25" font-family="Liberation Sans,sans-serif">5</text><text x="38" y="577" font-size="8.500" stroke="#000" stroke-width=".25" font-family="Liberation Sans,sans-serif">0</text><text x="38" y="585" font-size="8.500" stroke="#000" stroke-width=".25" font-family="Liberation Sans,sans-serif">5</text><text x="38" y="625" font-size="8.500" stroke="#000" stroke-width=".25" font-family="Liberation Sans,sans-serif">5</text><text x="38" y="633" font-size="8.500" stroke="#000" stroke-width=".25" font-family="Liberation Sans,sans-serif">0</text><text x="38" y="641" font-size="8.500" stroke="#000" stroke-width=".25" font-family="Liberation Sans,sans-serif">0</text></g><path d="M45 139v8l6-4z" fill="#000"/></svg>
<div class="a" style="left:33px;top:114px;width:1px;height:559px;background:#808080;"></div>
<div class="a" style="left:1px;top:673px;width:33px;height:1px;background:#808080;"></div>
<div class="a" style="left:51px;top:132px;width:1254px;height:521px;background:#fff;"></div>
<svg style="left:0px;top:0px" width="1366" height="768" viewBox="0 0 1366 768"><path d="M224.0 366.7C259.9 367.0 289.4 372.3 313.3 381.9" fill="none" stroke="#33ff88" stroke-width="10.6"/><path d="M313.3 381.9C332.7 389.8 348.5 400.6 361.1 414.0" fill="none" stroke="#3388ff" stroke-width="10.6"/><path d="M361.1 414.0C374.1 427.9 383.7 444.5 390.6 463.8" fill="none" stroke="#33ff88" stroke-width="10.6"/><path d="M390.6 463.8C398.8 486.7 403.1 513.3 404.4 543.2" fill="none" stroke="#3388ff" stroke-width="10.6"/><path d="M202 388.7L291 404.3" fill="none" stroke="#ff8888" stroke-width="10.6"/><path d="M291 404.3L338.4 434.6" fill="none" stroke="#ff8888" stroke-width="10.6"/><path d="M338.4 434.6L368.8 486.8" fill="none" stroke="#ff8888" stroke-width="10.6"/><path d="M368.8 486.8L382.5 565" fill="none" stroke="#ff8888" stroke-width="10.6"/><path d="M246.7 344.4C377.4 344.4 422.4 410.4 427.1 519.7" fill="none" stroke="#000" stroke-width="10.6"/><path d="M246.7 344.4C377.4 344.4 422.4 410.4 427.1 519.7" fill="none" stroke="#e00000" stroke-width="1"/><rect x="246.500" y="344.500" width="181" height="176" fill="none" stroke="#4a4a4a" stroke-width="1" stroke-dasharray="5 4"/><path d="M246.700 344.400H377.400M427.100 519.700L422.400 410.400" stroke="#7777ee" stroke-width="1" fill="none"/><path d="M252 344.500H312" stroke="#b8b8e8" stroke-width="1" stroke-dasharray="5 4" fill="none"/><circle cx="377.400" cy="344.400" r="3" fill="#fff" stroke="#000" stroke-width="1"/><circle cx="422.400" cy="410.400" r="3" fill="#fff" stroke="#000" stroke-width="1"/><path d="M246.500 339l5.500 5.500-5.500 5.500-5.500-5.500z" fill="#0000ee" stroke="#000" stroke-width=".6"/><path d="M246.500 339.500l5 5-5 5z" fill="#ffff00"/><path d="M427.500 515l4.500 4.500-4.500 4.500-4.500-4.500z" fill="#bfbfbf" stroke="#333" stroke-width=".8"/></svg>
<div class="a chk" style="left:1308px;top:136px;width:16px;height:516px;"></div>
<div class="btn" style="left:1308px;top:136px;width:16px;height:16px;"></div>
<svg style="left:1308px;top:136px" width="16" height="16" viewBox="0 0 16 16"><path d="M3.5 9.5l4-4 4 4z" fill="#000"/></svg>
<div class="btn" style="left:1308px;top:636px;width:16px;height:16px;"></div>
<svg style="left:1308px;top:636px" width="16" height="16" viewBox="0 0 16 16"><path d="M3.5 6.0l4 4 4-4z" fill="#000"/></svg>
<div class="btn" style="left:1308px;top:390px;width:16px;height:8px;"></div>
<div class="a chk" style="left:51px;top:655px;width:1254px;height:16px;"></div>
<div class="btn" style="left:51px;top:655px;width:16px;height:16px;"></div>
<svg style="left:51px;top:655px" width="16" height="16" viewBox="0 0 16 16"><path d="M9.5 3.5l-4 4 4 4z" fill="#000"/></svg>
<div class="btn" style="left:1289px;top:655px;width:16px;height:16px;"></div>
<svg style="left:1289px;top:655px" width="16" height="16" viewBox="0 0 16 16"><path d="M6.0 3.5l4 4-4 4z" fill="#000"/></svg>
<div class="btn" style="left:516px;top:655px;width:60px;height:16px;"></div>
<svg style="left:4px;top:119px" width="24" height="24" viewBox="0 0 24 24"><path d="M7 2v16l3.500-3.500 3 6.500 3-1.500-3-6 5-.5z" fill="#000"/></svg>
<div class="a chk" style="left:2px;top:146px;width:30px;height:30px;box-sizing:border-box;border:1px solid;border-color:#808080 #fff #fff #808080"></div>
<svg style="left:4px;top:149px" width="24" height="24" viewBox="0 0 24 24"><path d="M5 21c0-9 5-16 18-17" fill="none" stroke="#666" stroke-width="1"/><path d="M8 7l6 6" stroke="#00f" stroke-width="1"/><path d="M11.500 12.500l11 3.500-5.500 6.500z" fill="#000"/><rect x="5.500" y="4.500" width="5" height="5" fill="#5555ee" stroke="#0000ff" stroke-width="1.400"/><rect x="21.500" y="2.500" width="3" height="3" fill="#ccf" stroke="#0000ff"/><rect x="2.500" y="20.500" width="3" height="3" fill="#ccf" stroke="#0000ff"/></svg>
<svg style="left:4px;top:179px" width="24" height="24" viewBox="0 0 24 24"><defs><linearGradient id="tw" x1="0" y1="0" x2="0" y2="1"><stop offset="0" stop-color="#3a3a3a"/><stop offset=".5" stop-color="#888"/><stop offset="1" stop-color="#c4c4c4"/></linearGradient></defs><path d="M2 13.500C6 13.500 8 12 9.500 7C11 2 14 .8 17 1C20 1 22 3 21.500 6C21 7.500 19.500 7.500 19 6.500C19.500 5 18.500 4 17 4C14.500 4 13.500 6.500 14 9C14.500 11.500 16.500 13.500 19.500 13.500L23.500 13.500L23.500 22.800L2 22.800Z" fill="url(#tw)"/><path d="M2.500 14v8.300h20.500v-8.300" fill="none" stroke="#eee" stroke-width="1"/><path d="M2 13.500C6 13.500 8 12 9.500 7C11 2 14 .8 17 1C20 1 22 3 21.500 6C21 7.500 19.500 7.500 19 6.500C19.500 5 18.500 4 17 4C14.500 4 13.500 6.500 14 9C14.500 11.500 16.500 13.500 19.500 13.500L23.500 13.500" fill="none" stroke="#111" stroke-width="1.300"/><path d="M3 14.600C7 14.600 9.200 13 10.600 7.500C12 3 14.500 2 17 2.200" fill="none" stroke="#f4f4f4" stroke-width=".9"/></svg>
<svg style="left:4px;top:209px" width="24" height="24" viewBox="0 0 24 24"><path d="M15 15l7 7" stroke="#e9a010" stroke-width="4" stroke-linecap="round"/><path d="M13.500 13.500l3 3" stroke="#555" stroke-width="3"/><circle cx="9" cy="9" r="7.300" fill="#dbe8f4" stroke="#222" stroke-width="1.500"/><path d="M4.500 8c.5-2.500 2.500-4 5-4" fill="none" stroke="#fff" stroke-width="1.500"/></svg>
<svg style="left:4px;top:239px" width="24" height="24" viewBox="0 0 24 24"><defs><linearGradient id="rg" x1="0" y1="0" x2="1" y2="1"><stop offset="0" stop-color="#eef3f9"/><stop offset="1" stop-color="#9fb8d4"/></linearGradient></defs><rect x="3.500" y="2.500" width="19" height="19" fill="url(#rg)" stroke="#000" stroke-width="1.300"/></svg>
<svg style="left:4px;top:269px" width="24" height="24" viewBox="0 0 24 24"><defs><linearGradient id="b1" x1="0" y1="1" x2="1" y2="0"><stop offset="0" stop-color="#8a8ac8"/><stop offset="1" stop-color="#d4d4ee"/></linearGradient><linearGradient id="b2" x1="0" y1="0" x2="1" y2="0"><stop offset="0" stop-color="#dcdcfa"/><stop offset="1" stop-color="#fff"/></linearGradient><linearGradient id="b3" x1="1" y1="0" x2="0" y2="1"><stop offset="0" stop-color="#28287e"/><stop offset="1" stop-color="#9090c8"/></linearGradient></defs><path d="M3.200 4.400L14.500 .3L14 13.600L3.200 17.300Z" fill="url(#b1)"/><path d="M14.500 .3L23.300 7.500L23 19.700L14 13.600Z" fill="url(#b2)"/><path d="M3.200 17.300L14 13.600L23 19.700L12 23.500Z" fill="url(#b3)"/><path d="M14.500 .3L23.300 7.500L23 19.700L12 23.500L3.200 17.300L3.200 4.400Z" fill="none" stroke="#111" stroke-width="1.200" stroke-linejoin="round"/><path d="M4.200 5.200L14.400 1.500L22.300 8L22 19.200L12.100 22.500L4.200 16.800Z" fill="none" stroke="#f0f0ff" stroke-width=".8" opacity=".8"/></svg>
<svg style="left:4px;top:299px" width="24" height="24" viewBox="0 0 24 24"><defs><radialGradient id="cg" cx=".4" cy=".35" r=".7"><stop offset="0" stop-color="#fff"/><stop offset="1" stop-color="#f5a0a8"/></radialGradient></defs><circle cx="12.500" cy="12" r="9.500" fill="url(#cg)" stroke="#000" stroke-width="1.200"/></svg>
<svg style="left:4px;top:329px" width="24" height="24" viewBox="0 0 24 24"><path d="M9 2l9 4.500-1.500 9-10 2.500-4.500-8z" fill="#f5ec7a" stroke="#000" stroke-width="1.100"/><path d="M16 8l2.300 5 5.500.8-4 3.800 1 5.500-4.800-2.700-5 2.700 1-5.500-4-3.800 5.500-.8z" fill="#f7f08a" stroke="#000" stroke-width="1.100"/></svg>
<svg style="left:4px;top:359px" width="24" height="24" viewBox="0 0 24 24"><path d="M13.0 12.4L13.2 12.4L13.4 12.4L13.6 12.6L13.8 12.7L13.9 13.0L14.0 13.2L14.1 13.6L14.1 13.9L14.0 14.3L13.8 14.6L13.6 14.9L13.3 15.2L12.9 15.4L12.4 15.6L11.9 15.7L11.4 15.6L10.9 15.5L10.4 15.3L9.9 14.9L9.5 14.5L9.2 13.9L8.9 13.3L8.8 12.7L8.8 12.0L8.9 11.3L9.2 10.6L9.6 9.9L10.1 9.3L10.8 8.9L11.5 8.5L12.3 8.3L13.2 8.2L14.1 8.3L15.0 8.5L15.8 8.9L16.6 9.5L17.3 10.2L17.8 11.1L18.2 12.1L18.4 13.1L18.4 14.2L18.2 15.3L17.8 16.3L17.2 17.3L16.5 18.2L15.5 18.9L14.4 19.5L13.2 19.9L12.0 20.0L10.7 19.9L9.4 19.6L8.2 19.1L7.1 18.3L6.1 17.3L5.3 16.1L4.8 14.8L4.4 13.4L4.4 12.0L4.6 10.5L5.0 9.0L5.8 7.7L6.8 6.5L8.0 5.4L9.3 4.6L10.9 4.1L12.5 3.8L14.2 3.8L15.9 4.1L17.5 4.8L18.9 5.7L20.2 6.9L21.3 8.3L22.1 10.0L22.7 11.7L22.8 13.6L22.7 15.5L22.2 17.3L21.4 19.1L20.2 20.6L18.8 22.0" fill="none" stroke="#111" stroke-width="1.300"/></svg>
<svg style="left:4px;top:389px" width="24" height="24" viewBox="0 0 24 24"><defs><linearGradient id="pn" x1="0" y1="0" x2="1" y2=".4"><stop offset="0" stop-color="#fff200"/><stop offset=".5" stop-color="#ffc81a"/><stop offset="1" stop-color="#f39a12"/></linearGradient></defs><path d="M2.400 1.500H7.700L3 11C5.500 9.500 9 10 9 13C9 16 7.500 19 9.500 21.500C12 23.500 17 22 21 18.500" fill="none" stroke="#111" stroke-width="1.100"/><path d="M13 8.700L17.700 .2L23.500 6.400L21.200 12.200Z" fill="url(#pn)" stroke="#222" stroke-width=".8"/><path d="M13 8.700L21.200 12.200L12.300 20.500Z" fill="#fff" stroke="#222" stroke-width=".8"/><path d="M12.300 20.500L14.600 18.300L12.900 17.300Z" fill="#000"/></svg>
<svg style="left:4px;top:419px" width="24" height="24" viewBox="0 0 24 24"><path d="M3 1.600H14.800M3 1.600C7 7 9.500 13 9.500 17.500L8 21M14.800 1.600C10 7 9.500 14 12 19" fill="none" stroke="#111" stroke-width="1"/><path d="M5 21.900H11" stroke="#111" stroke-width="1"/><rect x="1.500" y="19.800" width="4" height="4" fill="#fff" stroke="#000" stroke-width="1.100"/><circle cx="12.400" cy="22" r="1.400" fill="#fff" stroke="#000" stroke-width=".9"/><path d="M15.300 5.700L19.400 .4L24.700 7.400L21.200 11Z" fill="#6aa2d0" stroke="#1a3a5a" stroke-width=".9"/><path d="M15 9.500L16.500 7.500L21 11.500L19.500 13.500Z" fill="#f6cf3a" stroke="#6a5a10" stroke-width=".7"/><path d="M16 11.500L18.500 13.500L13.500 20Z" fill="#e8e8e8" stroke="#222" stroke-width=".7"/></svg>
<svg style="left:4px;top:449px" width="24" height="24" viewBox="0 0 24 24"><path d="M1.300 .9C5 1 8 2 7.200 6C6.300 10 5 15 7.500 18.500C10 21.500 16 20.500 24 18.500C18 22.500 9 24 5 20.500C1.500 17 3.500 10 4.200 6C4.600 3.500 3.500 2 1.300 .9Z" fill="#000"/><path d="M12.400 20.200L14.500 10.500L19.500 5.500L22.500 8L19.500 15Z" fill="#f6c52a" stroke="#000" stroke-width="1"/><path d="M13 19.500L17.300 12.500" stroke="#000" stroke-width=".9"/><circle cx="17.500" cy="12" r="1" fill="#000"/><path d="M15.500 4.500L17 .8L24.500 2.500L22.500 8Z" fill="#5b8cc0" stroke="#123" stroke-width=".8"/><path d="M17 5L22.800 7.200" stroke="#e01010" stroke-width="1.500"/></svg>
<svg style="left:4px;top:479px" width="24" height="24" viewBox="0 0 24 24"><text x="-1" y="22" font-family="Liberation Sans,sans-serif" font-weight="bold" font-size="26" fill="#000" textLength="19" lengthAdjust="spacingAndGlyphs">A</text><path d="M19.500 1.500v21M17.500 1.500h4M17.500 22.500h4" stroke="#000" stroke-width="1" fill="none"/><path d="M20.500 2v20" stroke="#fff" stroke-width=".8"/></svg>
<svg style="left:4px;top:509px" width="24" height="24" viewBox="0 0 24 24"><rect x="14" y="10" width="9" height="12.500" rx="2" fill="#4aa02c" stroke="#123a0a" stroke-width="1" transform="rotate(-12 18 16)"/><path d="M15.500 13c2-2.500 5-3 7-1" fill="#7ac050"/><rect x="14.500" y="6" width="5.500" height="4" rx="1" fill="#f1f1f1" stroke="#444" stroke-width=".8" transform="rotate(-12 17 8)"/><g fill="#000"><circle cx="3" cy="3" r="1"/><circle cx="6" cy="2" r=".9"/><circle cx="2.500" cy="6.500" r="1"/><circle cx="5.500" cy="5.500" r=".9"/><circle cx="8.500" cy="4.500" r=".8"/><circle cx="4" cy="9.500" r=".9"/><circle cx="7.500" cy="8" r=".8"/><circle cx="10" cy="7" r=".7"/><circle cx="7" cy="11" r=".7"/></g></svg>
<svg style="left:4px;top:539px" width="24" height="24" viewBox="0 0 24 24"><defs><linearGradient id="eg" x1="0" y1="0" x2="1" y2="1"><stop offset="0" stop-color="#fdece6"/><stop offset="1" stop-color="#f0b8a8"/></linearGradient></defs><path d="M10.500 2l11.500 5.500-9 15-10-5.500z" fill="url(#eg)" stroke="#111" stroke-width="1.100"/></svg>
<svg style="left:4px;top:569px" width="24" height="24" viewBox="0 0 24 24"><ellipse cx="9" cy="21" rx="8" ry="2.300" fill="#8ed09a" stroke="#1a5a2a" stroke-width=".9"/><path d="M4 9c-1 4 0 8 2 12 1.500.5 3 0 3-1 0-3-1-6 1-9z" fill="#8ed09a" stroke="#1a5a2a" stroke-width=".9"/><path d="M5 8.500l13-5 5.500 11.500-12 5z" fill="#6aa0cc" stroke="#0a2a4a" stroke-width="1.100"/><path d="M5 8.500c3-3 9-5.500 13-5" fill="none" stroke="#0a2a4a"/><ellipse cx="11.500" cy="7" rx="6.800" ry="2" fill="#b8e0c0" stroke="#0a2a4a" stroke-width=".8" transform="rotate(-21 11.500 7)"/><path d="M10 1.500l2.500 11" stroke="#333" stroke-width="1"/><circle cx="12.500" cy="12.500" r="1.200" fill="#ddd" stroke="#000" stroke-width=".6"/></svg>
<svg style="left:4px;top:599px" width="24" height="24" viewBox="0 0 24 24"><defs><linearGradient id="cn" x1="0" y1="0" x2="1" y2="1"><stop offset="0" stop-color="#3aa04a"/><stop offset=".5" stop-color="#9ad0a0"/><stop offset="1" stop-color="#e4f2e4"/></linearGradient></defs><rect x="1" y="0" width="23" height="24" fill="url(#cn)"/><path d="M5 5l13 13" stroke="#111" stroke-width="1.400"/><rect x="3" y="3" width="4.500" height="4.500" fill="#fff" stroke="#111" stroke-width="1"/><circle cx="18.500" cy="18" r="2.500" fill="#fff" stroke="#111" stroke-width="1"/></svg>
<svg style="left:13px;top:652px" width="8" height="10" viewBox="0 0 8 10"><path d="M2.500 1l4 4-4 4z" fill="#000"/></svg>
<div class="a" style="left:1332px;top:114px;width:1px;height:560px;background:#808080;"></div>
<div class="a" style="left:1334px;top:114px;width:1px;height:559px;background:#fff;"></div>
<div class="a" style="left:1335px;top:114px;width:1px;height:559px;background:#ece9e4;"></div>
<div class="a" style="left:1334px;top:114px;width:31px;height:1px;background:#fff;"></div>
<div class="a" style="left:1334px;top:673px;width:32px;height:1px;background:#808080;"></div>
<div class="a" style="left:1361px;top:75px;width:1px;height:39px;background:#808080;"></div>
<div class="a" style="left:1362px;top:92px;width:3px;height:3px;background:#fff;"></div>
<div class="a" style="left:1364px;top:92px;width:1px;height:3px;background:#808080;"></div>
<svg style="left:1307px;top:116px" width="18" height="18" viewBox="0 0 18 18"><path d="M11.500 11.500l5 5" stroke="#444" stroke-width="2.200" stroke-linecap="round"/><circle cx="7.500" cy="7.500" r="6.300" fill="#e8e8e6" stroke="#444" stroke-width="1.300"/><text x="7.500" y="10" text-anchor="middle" font-size="7" font-weight="bold" font-family="Liberation Sans,sans-serif" fill="#444">1:1</text></svg>
<div class="a chk" style="left:1336px;top:116px;width:28px;height:28px;box-sizing:border-box;border:1px solid;border-color:#808080 #fff #fff #808080"></div>
<svg style="left:1342px;top:122px" width="16" height="16" viewBox="0 0 16 16"><path d="M5 5l7 7" stroke="#000" stroke-width="1.400"/><path d="M12.500 12.500l-4.500-1 3.500-3.500z" fill="#000"/><path d="M4 0.8999999999999999l2.6 2.6-2.6 2.6-2.6-2.6z" fill="#aab" stroke="#1a1aff" stroke-width="1.6"/><path d="M13.5 10.4l2.6 2.6-2.6 2.6-2.6-2.6z" fill="#aab" stroke="#2a8a2a" stroke-width="1.6"/></svg>
<div class="a" style="left:1341px;top:149px;width:18px;height:1px;background:#808080;"></div>
<div class="a" style="left:1341px;top:150px;width:18px;height:1px;background:#fff;"></div>
<svg style="left:1342px;top:161px" width="16" height="16" viewBox="0 0 16 16"><path d="M5 4.500h11M3.500 6v10" stroke="#333" stroke-width="1.300" stroke-dasharray="2 1"/><path d="M3.5 2.1l2.4 2.4-2.4 2.4-2.4-2.4z" fill="#88f" stroke="#1a1aff" stroke-width="1.5"/></svg>
<svg style="left:1342px;top:189px" width="16" height="16" viewBox="0 0 16 16"><path d="M1 14.500h13M13.500 14V1" stroke="#4a8a4a" stroke-width="1.300" stroke-dasharray="1.500 1.500" fill="none"/></svg>
<svg style="left:1342px;top:217px" width="16" height="16" viewBox="0 0 16 16"><path d="M1 12.500h9M13.500 9V1" stroke="#444" stroke-width="1.300" stroke-dasharray="1.500 1.500" fill="none"/><path d="M13.5 9.9l2.6 2.6-2.6 2.6-2.6-2.6z" fill="#aab" stroke="#2a8a2a" stroke-width="1.2"/></svg>
<svg style="left:1342px;top:245px" width="16" height="16" viewBox="0 0 16 16"><path d="M1.500 13.500h11M13.500 13V7" stroke="#222" stroke-width="1.300" stroke-dasharray="2 1" fill="none"/><path d="M13.5 2.1l2.4 2.4-2.4 2.4-2.4-2.4z" fill="#aab" stroke="#2a8a2a" stroke-width="1.2"/></svg>
<svg style="left:1342px;top:273px" width="16" height="16" viewBox="0 0 16 16"><path d="M1.500 13.500h11M13.500 13V2" stroke="#222" stroke-width="1.300" stroke-dasharray="2 1" fill="none"/><path d="M4 3.5l2 2-2 2-2-2z" fill="#cdc" stroke="#2a8a2a" stroke-width="1.2"/></svg>
<div class="a" style="left:1341px;top:301px;width:18px;height:1px;background:#808080;"></div>
<div class="a" style="left:1341px;top:302px;width:18px;height:1px;background:#fff;"></div>
<div class="a chk" style="left:1336px;top:308px;width:28px;height:28px;box-sizing:border-box;border:1px solid;border-color:#808080 #fff #fff #808080"></div>
<svg style="left:1342px;top:314px" width="16" height="16" viewBox="0 0 16 16"><path d="M2 9c2-5 6-5 7-2 1 4 3 6 7 7" fill="none" stroke="#555" stroke-width="1.300"/><path d="M8 1.0l2.5 2.5-2.5 2.5-2.5-2.5z" fill="#aaf" stroke="#1a1aff" stroke-width="1.6"/></svg>
<svg style="left:1342px;top:342px" width="16" height="16" viewBox="0 0 16 16"><path d="M1 1c6 1 9 5 8 11M5 10.500l4 2.500 6-5" fill="none" stroke="#1e8a1e" stroke-width="1.800" stroke-linecap="round"/></svg>
<svg style="left:1342px;top:370px" width="16" height="16" viewBox="0 0 16 16"><path d="M1 14L15 1" stroke="#333" stroke-width="1.100"/><path d="M1 9.500l14-4" stroke="#777" stroke-width=".9"/><path d="M8 5.5l2 2-2 2-2-2z" fill="#8a8" stroke="#2a8a2a" stroke-width="1.1"/></svg>
<svg style="left:1342px;top:398px" width="16" height="16" viewBox="0 0 16 16"><path d="M0 1c6 0 9 4 8 9M7 13c3-1 6-5 7-9" fill="none" stroke="#555" stroke-width="1.100"/><path d="M7 9.6l2.4 2.4-2.4 2.4-2.4-2.4z" fill="#aab" stroke="#2a8a2a" stroke-width="1.4"/></svg>
<svg style="left:1342px;top:426px" width="16" height="16" viewBox="0 0 16 16"><path d="M0 2.500h6M8 12c4 1 6-1 7-5" fill="none" stroke="#555" stroke-width="1.100"/><rect x="5" y="2.500" width="4.500" height="4.500" fill="#aab" stroke="#2a8a2a" stroke-width="1.400"/><path d="M7.500 7v5" stroke="#555"/></svg>
<svg style="left:1342px;top:454px" width="16" height="16" viewBox="0 0 16 16"><path d="M1 12l4-4M2.500 14l4-4M10 5l4-4M11.500 7l4-4" stroke="#e01010" stroke-width="1.300"/><path d="M3 12.500L13 3" stroke="#555" stroke-width=".9"/><circle cx="8" cy="8" r="2.200" fill="#aab" stroke="#2a8a2a" stroke-width="1.400"/></svg>
<svg style="left:1342px;top:482px" width="16" height="16" viewBox="0 0 16 16"><path d="M.5 14.500h13.500V1" fill="none" stroke="#666" stroke-width="1.100"/><circle cx="5.500" cy="7" r="1.800" fill="#cdc" stroke="#2a8a2a" stroke-width="1.300"/></svg>
<svg style="left:1342px;top:510px" width="16" height="16" viewBox="0 0 16 16"><path d="M1 6.500h8M5 2.500v8" stroke="#000" stroke-width="1.400"/><path d="M.5 14.500h13M14.500 14V1" stroke="#222" stroke-width="1.300" stroke-dasharray="2 1" fill="none"/></svg>
<div class="a" style="left:1341px;top:538px;width:18px;height:1px;background:#808080;"></div>
<div class="a" style="left:1341px;top:539px;width:18px;height:1px;background:#fff;"></div>
<svg style="left:1342px;top:550px" width="16" height="16" viewBox="0 0 16 16"><defs><linearGradient id="pg" x1="0" y1="0" x2="1" y2="1"><stop offset="0" stop-color="#fff"/><stop offset="1" stop-color="#c8c8c8"/></linearGradient></defs><rect x="2.500" y=".5" width="10" height="14" fill="url(#pg)" stroke="#555" stroke-width="1"/><path d="M13 1v14H3" fill="none" stroke="#000" stroke-width="1.200"/></svg>
<div class="a chk" style="left:1336px;top:572px;width:28px;height:28px;box-sizing:border-box;border:1px solid;border-color:#808080 #fff #fff #808080"></div>
<svg style="left:1342px;top:578px" width="16" height="16" viewBox="0 0 16 16"><path d="M1.800 0v16M6 0v16M10.200 0v16M14.400 0v16M0 1.800h16M0 6h16M0 10.200h16M0 14.400h16" stroke="#0000ff" stroke-width="1.500"/></svg>
<div class="a chk" style="left:1336px;top:600px;width:28px;height:28px;box-sizing:border-box;border:1px solid;border-color:#808080 #fff #fff #808080"></div>
<svg style="left:1342px;top:606px" width="16" height="16" viewBox="0 0 16 16"><path d="M2.500 0v16M13.500 0v16M13.500 0L6 16" stroke="#0000ff" stroke-width="1.500" fill="none"/></svg>
<svg style="left:1309px;top:655px" width="14" height="16" viewBox="0 0 14 16"><defs><linearGradient id="cm1" x1="0" y1="0" x2="0" y2="1"><stop offset="0" stop-color="#3c3"/><stop offset=".55" stop-color="#39c"/><stop offset="1" stop-color="#a3c"/></linearGradient><linearGradient id="cm2" x1="0" y1="0" x2="1" y2="0"><stop offset="0" stop-color="#fff" stop-opacity="0"/><stop offset="1" stop-color="#e33"/></linearGradient><pattern id="cmp" width="2" height="2" patternUnits="userSpaceOnUse"><rect width="1" height="1" fill="#d4d0c8"/><rect x="1" y="1" width="1" height="1" fill="#d4d0c8"/></pattern></defs><path d="M1 .5L13.500 10 3.500 15.500z" fill="url(#cm1)"/><path d="M1 .5L13.500 10 3.500 15.500z" fill="url(#cm2)"/><path d="M1 .5L13.500 10 3.500 15.500z" fill="url(#cmp)" opacity=".35"/></svg>
<div class="a" style="left:557px;top:139px;width:259px;height:508px;background:#d4d0c8;box-sizing:border-box;border:1px solid;border-color:#d4d0c8 #404040 #404040 #d4d0c8;box-shadow:inset 1px 1px 0 #fff, inset -1px -1px 0 #808080"></div>
<div class="a" style="left:561px;top:143px;width:251px;height:18px;background:linear-gradient(90deg,#808080,#c0c0c0);"></div>
<svg style="left:563px;top:144px" width="16" height="16" viewBox="0 0 16 16"><path d="M7.600 .2L15.600 7.600Q15.800 8.700 14.300 9L11.600 9.600Q10.800 10.300 11.800 10.800L12.500 11.300Q12.300 12.100 11 12L9.800 12.300Q9 13 10 13.700Q9.300 15.600 7.600 15.600Q5.800 15.400 6.200 13.800Q6.600 12.800 5.400 12.600L3.400 12Q2.600 11.300 4 10.800Q4.800 10.200 3.800 9.600L1.200 9Q-.3 8.700 0 7.600Z" fill="#000"/><path d="M7.600 1.400L14 7.200L11.400 6.600L9.600 8L7.800 6.800L5.800 8.200L4.200 7.200L1.800 7.600Z" fill="url(#ilg)"/><circle cx="14" cy="11.500" r=".8" fill="#000"/><circle cx="2.400" cy="13.400" r=".7" fill="#000"/><circle cx="13.500" cy="13.800" r=".5" fill="#000"/></svg>
<div class="t" style="left:580px;top:145px;font-weight:bold;font-size:13px;color:#d4d0c8;line-height:15px;letter-spacing:-0.187px;">01-Laser Plugin</div>
<div class="btn" style="left:794px;top:145px;width:16px;height:14px;"></div>
<svg style="left:794px;top:145px" width="16" height="14" viewBox="0 0 16 14"><path d="M4 3l7 7M5 3l7 7M11 3l-7 7M12 3l-7 7" stroke="#000" stroke-width="1" fill="none"/></svg>
<div class="a" style="left:569px;top:196px;width:235px;height:353px;box-sizing:border-box;border:1px solid;border-color:#fff #404040 #404040 #fff;box-shadow:inset -1px -1px 0 #808080"></div>
<div class="a" style="left:569px;top:172px;width:76px;height:25px;box-sizing:border-box;background:#d4d0c8;border:1px solid;border-color:#fff #404040 #d4d0c8 #fff;border-bottom:none;border-radius:3px 3px 0 0;box-shadow:inset -1px 0 0 #808080"></div>
<div class="t" style="left:574.3px;top:180px;letter-spacing:-0.201px;">Laser Plugin</div>
<div class="t" style="left:575.7px;top:210px;letter-spacing:0.084px;">Biarc interpolation tolerance</div>
<div class="sunk" style="left:742px;top:205px;width:44px;height:22px;"></div>
<div class="t" style="left:746.7px;top:210px;">0,20</div>
<div class="btn2" style="left:785px;top:206px;width:12px;height:10px;"></div>
<div class="btn2" style="left:785px;top:216px;width:12px;height:11px;"></div>
<svg style="left:785px;top:206px" width="12" height="21" viewBox="0 0 12 21"><path d="M3.5 6.2l2.500-2.500 2.500 2.500z" fill="#000"/><path d="M3.5 14.3l2.500 2.500 2.500-2.500z" fill="#000"/></svg>
<div class="t" style="left:575.7px;top:236px;letter-spacing:0.131px;">Maximum splitting depth</div>
<div class="sunk" style="left:747px;top:231px;width:39px;height:22px;"></div>
<div class="t" style="left:751.7px;top:236px;">1</div>
<div class="btn2" style="left:785px;top:232px;width:12px;height:10px;"></div>
<div class="btn2" style="left:785px;top:242px;width:12px;height:11px;"></div>
<svg style="left:785px;top:232px" width="12" height="21" viewBox="0 0 12 21"><path d="M3.5 6.2l2.500-2.500 2.500 2.500z" fill="#000"/><path d="M3.5 14.3l2.500 2.500 2.500-2.500z" fill="#000"/></svg>
<div class="t" style="left:575.7px;top:262px;letter-spacing:-0.199px;">Minimum arc radius</div>
<div class="sunk" style="left:721px;top:257px;width:65px;height:22px;"></div>
<div class="t" style="left:725.7px;top:262px;">1,00</div>
<div class="btn2" style="left:785px;top:258px;width:12px;height:10px;"></div>
<div class="btn2" style="left:785px;top:268px;width:12px;height:11px;"></div>
<svg style="left:785px;top:258px" width="12" height="21" viewBox="0 0 12 21"><path d="M3.5 6.2l2.500-2.500 2.500 2.500z" fill="#000"/><path d="M3.5 14.3l2.500 2.500 2.500-2.500z" fill="#000"/></svg>
<div class="t" style="left:575.7px;top:288px;letter-spacing:-0.005px;">Offset along X axis</div>
<div class="sunk" style="left:721px;top:283px;width:65px;height:22px;"></div>
<div class="t" style="left:725.7px;top:288px;">0,00</div>
<div class="btn2" style="left:785px;top:284px;width:12px;height:10px;"></div>
<div class="btn2" style="left:785px;top:294px;width:12px;height:11px;"></div>
<svg style="left:785px;top:284px" width="12" height="21" viewBox="0 0 12 21"><path d="M3.5 6.2l2.500-2.500 2.500 2.500z" fill="#000"/><path d="M3.5 14.3l2.500 2.500 2.500-2.500z" fill="#000"/></svg>
<div class="t" style="left:575.7px;top:314px;letter-spacing:0.049px;">Offset along Y axis</div>
<div class="sunk" style="left:721px;top:309px;width:65px;height:22px;"></div>
<div class="t" style="left:725.7px;top:314px;">0,00</div>
<div class="btn2" style="left:785px;top:310px;width:12px;height:10px;"></div>
<div class="btn2" style="left:785px;top:320px;width:12px;height:11px;"></div>
<svg style="left:785px;top:310px" width="12" height="21" viewBox="0 0 12 21"><path d="M3.5 6.2l2.500-2.500 2.500 2.500z" fill="#000"/><path d="M3.5 14.3l2.500 2.500 2.500-2.500z" fill="#000"/></svg>
<div class="t" style="left:575.7px;top:340px;letter-spacing:0.280px;">Feed rate (mm/min)</div>
<div class="sunk" style="left:747px;top:335px;width:39px;height:22px;"></div>
<div class="t" style="left:751.7px;top:340px;">100</div>
<div class="btn2" style="left:785px;top:336px;width:12px;height:10px;"></div>
<div class="btn2" style="left:785px;top:346px;width:12px;height:11px;"></div>
<svg style="left:785px;top:336px" width="12" height="21" viewBox="0 0 12 21"><path d="M3.5 6.2l2.500-2.500 2.500 2.500z" fill="#000"/><path d="M3.5 14.3l2.500 2.500 2.500-2.500z" fill="#000"/></svg>
<div class="t" style="left:575.7px;top:366px;letter-spacing:0.235px;">Laser power, %</div>
<div class="sunk" style="left:747px;top:361px;width:39px;height:22px;"></div>
<div class="t" style="left:751.7px;top:366px;">100</div>
<div class="btn2" style="left:785px;top:362px;width:12px;height:10px;"></div>
<div class="btn2" style="left:785px;top:372px;width:12px;height:11px;"></div>
<svg style="left:785px;top:362px" width="12" height="21" viewBox="0 0 12 21"><path d="M3.5 6.2l2.500-2.500 2.500 2.500z" fill="#000"/><path d="M3.5 14.3l2.500 2.500 2.500-2.500z" fill="#000"/></svg>
<div class="t" style="left:575.7px;top:392px;letter-spacing:-0.198px;">Scale along X axis:</div>
<div class="sunk" style="left:721px;top:387px;width:65px;height:22px;"></div>
<div class="t" style="left:725.7px;top:392px;">1,00</div>
<div class="btn2" style="left:785px;top:388px;width:12px;height:10px;"></div>
<div class="btn2" style="left:785px;top:398px;width:12px;height:11px;"></div>
<svg style="left:785px;top:388px" width="12" height="21" viewBox="0 0 12 21"><path d="M3.5 6.2l2.500-2.500 2.500 2.500z" fill="#000"/><path d="M3.5 14.3l2.500 2.500 2.500-2.500z" fill="#000"/></svg>
<div class="t" style="left:575.7px;top:418px;letter-spacing:-0.159px;">Scale along Y axis:</div>
<div class="sunk" style="left:721px;top:413px;width:65px;height:22px;"></div>
<div class="t" style="left:725.7px;top:418px;">1,00</div>
<div class="btn2" style="left:785px;top:414px;width:12px;height:10px;"></div>
<div class="btn2" style="left:785px;top:424px;width:12px;height:11px;"></div>
<svg style="left:785px;top:414px" width="12" height="21" viewBox="0 0 12 21"><path d="M3.5 6.2l2.500-2.500 2.500 2.500z" fill="#000"/><path d="M3.5 14.3l2.500 2.500 2.500-2.500z" fill="#000"/></svg>
<div class="t" style="left:575.7px;top:444px;letter-spacing:-0.112px;">Units:</div>
<div class="sunk" style="left:615px;top:439px;width:181px;height:22px;"></div>
<div class="t" style="left:619px;top:444px;">px</div>
<div class="btn" style="left:778px;top:441px;width:16px;height:18px;"></div>
<svg style="left:778px;top:441px" width="16" height="18" viewBox="0 0 16 18"><path d="M4.300 7h7l-3.500 4z" fill="#000"/></svg>
<div class="t" style="left:575.7px;top:470px;letter-spacing:-0.262px;">File name:</div>
<div class="sunk" style="left:639px;top:465px;width:157px;height:22px;"></div>
<div class="t" style="left:642.5px;top:470px;letter-spacing:0.596px;">output.ngc</div>
<div class="t" style="left:575.7px;top:496px;letter-spacing:0.066px;">Directory:</div>
<div class="sunk" style="left:637px;top:491px;width:159px;height:22px;"></div>
<div class="t" style="left:640.4px;top:496px;">D:\</div>
<div class="t" style="left:575.7px;top:522px;letter-spacing:-0.018px;">Draw curves:</div>
<div class="sunk" style="left:779px;top:522px;width:13px;height:13px;"></div>
<svg style="left:779px;top:522px" width="13" height="13" viewBox="0 0 13 13"><path d="M3 6l2.500 2.500 4.500-4.500" fill="none" stroke="#000" stroke-width="1.800"/></svg>
<div class="a" style="left:563px;top:561px;width:247px;height:1px;background:#808080;"></div>
<div class="a" style="left:563px;top:562px;width:247px;height:1px;background:#fff;"></div>
<div class="t" style="left:568.2px;top:578px;letter-spacing:0.125px;">Live preview</div>
<div class="sunk" style="left:786px;top:578px;width:13px;height:13px;"></div>
<div class="a" style="left:563px;top:602px;width:247px;height:1px;background:#808080;"></div>
<div class="a" style="left:563px;top:603px;width:247px;height:1px;background:#fff;"></div>
<div class="btn" style="left:629px;top:609px;width:85px;height:27px;"></div>
<div class="t" style="left:629px;top:616px;width:85px;text-align:center"><u>C</u>lose</div>
<div class="a" style="left:720px;top:609px;width:85px;height:27px;background:#000"></div>
<div class="btn" style="left:721px;top:610px;width:83px;height:25px;"></div>
<div class="t" style="left:720px;top:616px;width:85px;text-align:center"><u>A</u>pply</div>
<div class="a" style="left:1px;top:675px;width:1350px;height:1px;background:#404040;"></div>
<div class="a" style="left:1px;top:675px;width:1px;height:19px;background:#404040;"></div>
<div class="a" style="left:2px;top:693px;width:1349px;height:1px;background:#fff;"></div>
<div class="a" style="left:1350px;top:676px;width:1px;height:18px;background:#fff;"></div>
<div class="a" style="left:2px;top:676px;width:1348px;height:17px;overflow:hidden"><div class="a" style="left:17px;top:0;width:17px;height:17px;background:#000000"></div><div class="a" style="left:34px;top:0;width:17px;height:17px;background:#1a1a1a"></div><div class="a" style="left:51px;top:0;width:17px;height:17px;background:#333333"></div><div class="a" style="left:68px;top:0;width:17px;height:17px;background:#4d4d4d"></div><div class="a" style="left:85px;top:0;width:17px;height:17px;background:#666666"></div><div class="a" style="left:102px;top:0;width:17px;height:17px;background:#808080"></div><div class="a" style="left:119px;top:0;width:17px;height:17px;background:#999999"></div><div class="a" style="left:136px;top:0;width:17px;height:17px;background:#b3b3b3"></div><div class="a" style="left:153px;top:0;width:17px;height:17px;background:#cccccc"></div><div class="a" style="left:170px;top:0;width:17px;height:17px;background:#e6e6e6"></div><div class="a" style="left:187px;top:0;width:17px;height:17px;background:#ececec"></div><div class="a" style="left:204px;top:0;width:17px;height:17px;background:#f2f2f2"></div><div class="a" style="left:221px;top:0;width:17px;height:17px;background:#f9f9f9"></div><div class="a" style="left:238px;top:0;width:17px;height:17px;background:#ffffff"></div><div class="a" style="left:255px;top:0;width:17px;height:17px;background:#800000"></div><div class="a" style="left:272px;top:0;width:17px;height:17px;background:#ff0000"></div><div class="a" style="left:289px;top:0;width:17px;height:17px;background:#808000"></div><div class="a" style="left:306px;top:0;width:17px;height:17px;background:#ffff00"></div><div class="a" style="left:323px;top:0;width:17px;height:17px;background:#008000"></div><div class="a" style="left:340px;top:0;width:17px;height:17px;background:#00ff00"></div><div class="a" style="left:357px;top:0;width:17px;height:17px;background:#008080"></div><div class="a" style="left:374px;top:0;width:17px;height:17px;background:#00ffff"></div><div class="a" style="left:391px;top:0;width:17px;height:17px;background:#000080"></div><div class="a" style="left:408px;top:0;width:17px;height:17px;background:#0000ff"></div><div class="a" style="left:425px;top:0;width:17px;height:17px;background:#800080"></div><div class="a" style="left:442px;top:0;width:17px;height:17px;background:#ff00ff"></div><div class="a" style="left:459px;top:0;width:17px;height:17px;background:#2b0000"></div><div class="a" style="left:476px;top:0;width:17px;height:17px;background:#550000"></div><div class="a" style="left:493px;top:0;width:17px;height:17px;background:#800000"></div><div class="a" style="left:510px;top:0;width:17px;height:17px;background:#aa0000"></div><div class="a" style="left:527px;top:0;width:17px;height:17px;background:#d40000"></div><div class="a" style="left:544px;top:0;width:17px;height:17px;background:#ff0000"></div><div class="a" style="left:561px;top:0;width:17px;height:17px;background:#ff2a2a"></div><div class="a" style="left:578px;top:0;width:17px;height:17px;background:#ff5555"></div><div class="a" style="left:595px;top:0;width:17px;height:17px;background:#ff8080"></div><div class="a" style="left:612px;top:0;width:17px;height:17px;background:#ffaaaa"></div><div class="a" style="left:629px;top:0;width:17px;height:17px;background:#ffd5d5"></div><div class="a" style="left:646px;top:0;width:17px;height:17px;background:#280b0b"></div><div class="a" style="left:663px;top:0;width:17px;height:17px;background:#501616"></div><div class="a" style="left:680px;top:0;width:17px;height:17px;background:#782121"></div><div class="a" style="left:697px;top:0;width:17px;height:17px;background:#a02c2c"></div><div class="a" style="left:714px;top:0;width:17px;height:17px;background:#c83737"></div><div class="a" style="left:731px;top:0;width:17px;height:17px;background:#d35f5f"></div><div class="a" style="left:748px;top:0;width:17px;height:17px;background:#de8787"></div><div class="a" style="left:765px;top:0;width:17px;height:17px;background:#e9afaf"></div><div class="a" style="left:782px;top:0;width:17px;height:17px;background:#f4d7d7"></div><div class="a" style="left:799px;top:0;width:17px;height:17px;background:#241c1c"></div><div class="a" style="left:816px;top:0;width:17px;height:17px;background:#483737"></div><div class="a" style="left:833px;top:0;width:17px;height:17px;background:#6c5353"></div><div class="a" style="left:850px;top:0;width:17px;height:17px;background:#916f6f"></div><div class="a" style="left:867px;top:0;width:17px;height:17px;background:#ac9393"></div><div class="a" style="left:884px;top:0;width:17px;height:17px;background:#c8b7b7"></div><div class="a" style="left:901px;top:0;width:17px;height:17px;background:#e3dbdb"></div><div class="a" style="left:918px;top:0;width:17px;height:17px;background:#2b1100"></div><div class="a" style="left:935px;top:0;width:17px;height:17px;background:#552200"></div><div class="a" style="left:952px;top:0;width:17px;height:17px;background:#803300"></div><div class="a" style="left:969px;top:0;width:17px;height:17px;background:#aa4400"></div><div class="a" style="left:986px;top:0;width:17px;height:17px;background:#d45500"></div><div class="a" style="left:1003px;top:0;width:17px;height:17px;background:#ff6600"></div><div class="a" style="left:1020px;top:0;width:17px;height:17px;background:#ff7f2a"></div><div class="a" style="left:1037px;top:0;width:17px;height:17px;background:#ff9955"></div><div class="a" style="left:1054px;top:0;width:17px;height:17px;background:#ffb380"></div><div class="a" style="left:1071px;top:0;width:17px;height:17px;background:#ffccaa"></div><div class="a" style="left:1088px;top:0;width:17px;height:17px;background:#ffe6d5"></div><div class="a" style="left:1105px;top:0;width:17px;height:17px;background:#28170b"></div><div class="a" style="left:1122px;top:0;width:17px;height:17px;background:#502d16"></div><div class="a" style="left:1139px;top:0;width:17px;height:17px;background:#784421"></div><div class="a" style="left:1156px;top:0;width:17px;height:17px;background:#a05a2c"></div><div class="a" style="left:1173px;top:0;width:17px;height:17px;background:#c87137"></div><div class="a" style="left:1190px;top:0;width:17px;height:17px;background:#d38d5f"></div><div class="a" style="left:1207px;top:0;width:17px;height:17px;background:#deaa87"></div><div class="a" style="left:1224px;top:0;width:17px;height:17px;background:#e9c6af"></div><div class="a" style="left:1241px;top:0;width:17px;height:17px;background:#f4e3d7"></div><div class="a" style="left:1258px;top:0;width:17px;height:17px;background:#241f1c"></div><div class="a" style="left:1275px;top:0;width:17px;height:17px;background:#483e37"></div><div class="a" style="left:1292px;top:0;width:17px;height:17px;background:#6c5d53"></div><div class="a" style="left:1309px;top:0;width:17px;height:17px;background:#917c6f"></div><div class="a" style="left:1326px;top:0;width:17px;height:17px;background:#ac9d93"></div><div class="a" style="left:1343px;top:0;width:17px;height:17px;background:#c8beb7"></div></div>
<div class="a" style="left:2px;top:676px;width:17px;height:17px;background:#fff;"></div>
<svg style="left:2px;top:676px" width="17" height="17" viewBox="0 0 17 17"><path d="M0 0l17 17M17 0L0 17" stroke="#800000" stroke-width="1.300"/></svg>
<svg style="left:1354px;top:676px" width="8" height="10" viewBox="0 0 8 10"><path d="M6 1L2 5l4 4z" fill="#000"/></svg>
<div class="a chk" style="left:1px;top:696px;width:1350px;height:15px;"></div>
<div class="btn" style="left:1px;top:696px;width:15px;height:15px;"></div>
<svg style="left:1px;top:696px" width="15" height="15" viewBox="0 0 15 15"><path d="M9.0 3.0l-4 4 4 4z" fill="#808080"/></svg>
<div class="btn" style="left:1336px;top:696px;width:15px;height:15px;"></div>
<svg style="left:1336px;top:696px" width="15" height="15" viewBox="0 0 15 15"><path d="M5.5 3.0l4 4-4 4z" fill="#000"/></svg>
<div class="btn" style="left:16px;top:696px;width:242px;height:15px;"></div>
<div class="t" style="left:2px;top:713px;font-size:11px;line-height:13px">Fill:</div>
<div class="t" style="left:69px;top:713px;font-size:11px;line-height:13px;font-style:italic">None</div>
<div class="t" style="left:2px;top:727px;font-size:11px;line-height:13px">Stroke:</div>
<div class="a" style="left:41px;top:726px;width:72px;height:14px;background:#000;"></div>
<div class="t" style="left:116px;top:727px;font-size:11px;line-height:13px">1</div>
<div class="t" style="left:126px;top:720px;font-size:11px;line-height:13px">O:</div>
<div class="sunk" style="left:140px;top:715px;width:27px;height:21px;"></div>
<div class="t" style="left:143px;top:719px;font-size:12px">100</div>
<div class="btn2" style="left:166px;top:716px;width:12px;height:9px;"></div>
<div class="btn2" style="left:166px;top:725px;width:12px;height:10px;"></div>
<svg style="left:166px;top:716px" width="12" height="19" viewBox="0 0 12 19"><path d="M3.5 5.7l2.500-2.500 2.500 2.500z" fill="#000"/><path d="M3.5 12.8l2.500 2.500 2.500-2.500z" fill="#000"/></svg>
<div class="a" style="left:180px;top:713px;width:1px;height:27px;background:#808080;"></div>
<div class="a" style="left:181px;top:713px;width:1px;height:27px;background:#fff;"></div>
<svg style="left:185px;top:717px" width="18" height="16" viewBox="0 0 18 16"><path d="M1 9c3-5 12-5 15 0-3 4.500-12 4.500-15 0z" fill="#fff" stroke="#000" stroke-width="1.200"/><circle cx="8.500" cy="8.800" r="3.300" fill="#000"/><circle cx="7.500" cy="7.800" r="1" fill="#fff"/><path d="M3 4.500L1.500 2M6 3L5.500 .5M11 3l.5-2.500M14 4.500L15.500 2" stroke="#000" stroke-width="1.100"/></svg>
<svg style="left:209px;top:717px" width="14" height="17" viewBox="0 0 14 17"><path d="M4 8V5c0-4.500 7-4.500 7 0v1" fill="none" stroke="#333" stroke-width="1.500"/><rect x="1.500" y="8" width="10" height="8" rx="1" fill="#f5e27a" stroke="#6b5a10" stroke-width="1"/><rect x="5.500" y="10.500" width="2" height="3" fill="#333"/></svg>
<div class="sunk" style="left:228px;top:713px;width:74px;height:26px;"></div>
<div class="t" style="left:232.6px;top:719px;font-weight:bold;font-size:11px;letter-spacing:-0.047px;">•Layer 1</div>
<div class="btn" style="left:285px;top:715px;width:15px;height:22px;"></div>
<svg style="left:285px;top:715px" width="15" height="22" viewBox="0 0 15 22"><path d="M3.500 9h8l-4 4.500z" fill="#000"/></svg>
<div class="t" style="left:309.5px;top:719px;font-weight:bold;letter-spacing:0.643px;">1 of 2</div>
<div class="t" style="left:349.8px;top:719px;letter-spacing:0.171px;">nodes selected. Drag to select nodes, click clear the selection</div>
<div class="a" style="left:1204px;top:713px;width:1px;height:27px;background:#808080;"></div>
<div class="a" style="left:1205px;top:713px;width:1px;height:27px;background:#fff;"></div>
<div class="t" style="left:1207px;top:713px;font-family:'Liberation Mono',monospace;font-size:11px;line-height:13px;letter-spacing:0.13px">X:</div>
<div class="t" style="left:1228px;top:713px;font-family:'Liberation Mono',monospace;font-size:11px;line-height:13px;letter-spacing:0.13px">103,30</div>
<div class="t" style="left:1207px;top:727px;font-family:'Liberation Mono',monospace;font-size:11px;line-height:13px;letter-spacing:0.13px">Y:</div>
<div class="t" style="left:1228px;top:727px;font-family:'Liberation Mono',monospace;font-size:11px;line-height:13px;letter-spacing:0.13px">542,41</div>
<div class="t" style="left:1278px;top:720px;font-size:11px;line-height:13px">Z:</div>
<div class="sunk" style="left:1290px;top:715px;width:46px;height:21px;"></div>
<div class="t" style="left:1294.3px;top:719px;font-size:12px;letter-spacing:-0.395px;">1120%</div>
<div class="btn2" style="left:1335px;top:716px;width:12px;height:9px;"></div>
<div class="btn2" style="left:1335px;top:725px;width:12px;height:10px;"></div>
<svg style="left:1335px;top:716px" width="12" height="19" viewBox="0 0 12 19"><path d="M3.5 5.7l2.500-2.500 2.500 2.500z" fill="#000"/><path d="M3.5 12.8l2.500 2.500 2.500-2.500z" fill="#000"/></svg>
<svg style="left:1352px;top:726px" width="14" height="14" viewBox="0 0 14 14"><path d="M13 2L2 13M13 6L6 13M13 10l-3 3" stroke="#808080" stroke-width="1.300"/><path d="M14 2L3 13M14 6L7 13M14 10l-3 3" stroke="#fff" stroke-width="1"/></svg>
<div class="a" style="left:0px;top:741px;width:1366px;height:1px;background:#fff;"></div>
<div class="btn" style="left:2px;top:744px;width:52px;height:22px;"></div>
<svg style="left:5px;top:747px" width="16" height="16" viewBox="0 0 16 16"><path d="M1 3c2.500-1.500 4.500-1.500 7 0l-1.500 5.500c-2.500-1.500-4.500-1.500-7 0z" fill="#e8542a"/><path d="M9 3.300c2.500 1.500 4.500 1.500 7 0l-1.500 5.500c-2.500 1.500-4.500 1.500-7 0z" fill="#7cb82f"/><path d="M-.8 9.500c2.500-1.500 4.500-1.500 7 0l-1.500 5.500c-2.500-1.500-4.500-1.500-7 0z" fill="#2f7ed8"/><path d="M7.200 9.800c2.500 1.500 4.500 1.500 7 0l-1.500 5.500c-2.500 1.500-4.500 1.500-7 0z" fill="#f5c02a"/></svg>
<div class="t" style="left:21px;top:748px;font-weight:bold;font-size:12px;letter-spacing:0.055px;">Пуск</div>
<div class="btn" style="left:63px;top:744px;width:159px;height:22px;"></div>
<div class="t" style="left:86.4px;top:748px;font-size:12px;letter-spacing:0.170px;">Gcodetools - plug-in I...</div>
<svg style="left:68px;top:747px" width="16" height="16" viewBox="0 0 16 16"><circle cx="8" cy="8" r="7.500" fill="#dd4b39"/><path d="M8 8L1.500 4.200A7.500 7.500 0 0 0 4.600 14.700z" fill="#2da94f"/><path d="M8 8l-3.400 6.700A7.500 7.500 0 0 0 15.300 6z" fill="#fcd116"/><path d="M8 8h7.300A7.500 7.500 0 0 0 1.500 4.200z" fill="#dd4b39"/><circle cx="8" cy="8" r="3.500" fill="#fff"/><circle cx="8" cy="8" r="2.700" fill="#4a8af4"/></svg>
<div class="btn" style="left:225px;top:744px;width:159px;height:22px;"></div>
<div class="t" style="left:248.4px;top:748px;font-size:12px;letter-spacing:0.022px;">Downloads_ - FreeCo...</div>
<svg style="left:230px;top:747px" width="16" height="16" viewBox="0 0 16 16"><circle cx="8" cy="8" r="7.500" fill="#4a9be8" stroke="#2a6ab8" stroke-width=".8"/><circle cx="8" cy="8" r="3" fill="#f6b01a"/><path d="M8 2v3M8 11v3M2 8h3M11 8h3M3.800 3.800l2 2M10.200 10.200l2 2M12.200 3.800l-2 2M3.800 12.200l2-2" stroke="#e8f2fc" stroke-width="1.200"/></svg>
<div class="a chk" style="left:387px;top:744px;width:159px;height:22px;box-sizing:border-box;border:1px solid;border-color:#404040 #fff #fff #404040;box-shadow:inset 1px 1px 0 #808080"></div>
<div class="t" style="left:410.4px;top:749px;font-weight:bold;font-size:12px;letter-spacing:0.644px;">New document 1 - ...</div>
<svg style="left:392px;top:748px" width="16" height="16" viewBox="0 0 16 16"><path d="M7.600 .2L15.600 7.600Q15.800 8.700 14.300 9L11.600 9.600Q10.800 10.300 11.800 10.800L12.500 11.300Q12.300 12.100 11 12L9.800 12.300Q9 13 10 13.700Q9.300 15.600 7.600 15.600Q5.800 15.400 6.200 13.800Q6.600 12.800 5.400 12.600L3.400 12Q2.600 11.300 4 10.800Q4.800 10.200 3.800 9.600L1.200 9Q-.3 8.700 0 7.600Z" fill="#000"/><path d="M7.600 1.400L14 7.200L11.400 6.600L9.600 8L7.800 6.800L5.800 8.200L4.200 7.200L1.800 7.600Z" fill="url(#ilg)"/><circle cx="14" cy="11.500" r=".8" fill="#000"/><circle cx="2.400" cy="13.400" r=".7" fill="#000"/></svg>
<div class="btn" style="left:549px;top:744px;width:159px;height:22px;"></div>
<div class="t" style="left:572.4px;top:748px;font-size:12px;letter-spacing:-0.403px;">AIMP3</div>
<svg style="left:554px;top:747px" width="16" height="16" viewBox="0 0 16 16"><circle cx="8" cy="8" r="7.500" fill="#f5a91a" stroke="#1a1a1a" stroke-width="1.200"/><path d="M8 3.500l4 7.500h-8z" fill="none" stroke="#1a1a1a" stroke-width="1.400"/></svg>
<div class="t" style="left:1156px;top:748px;font-size:12px">EN</div>
<div class="a" style="left:1176px;top:745px;width:1px;height:20px;background:#808080;"></div>
<div class="a" style="left:1177px;top:745px;width:1px;height:20px;background:#fff;"></div>
<div class="a" style="left:1180px;top:744px;width:184px;height:22px;box-sizing:border-box;border:1px solid;border-color:#808080 #fff #fff #808080"></div>
<svg style="left:1185px;top:749px" width="10" height="12" viewBox="0 0 10 12"><path d="M1.500 5l3.500-3.500 3.500 3.500M1.500 9.500l3.500-3.500 3.500 3.500" fill="none" stroke="#000" stroke-width="1.500"/></svg>
<svg style="left:1202px;top:747px" width="16" height="16" viewBox="0 0 16 16"><rect x="1.500" y="3.500" width="8" height="11" rx="1" fill="#f4f4f4" stroke="#333" stroke-width="1"/><path d="M7 6.500h7v3c0 2-1.500 3-3.500 3s-3.500-1-3.500-3z" fill="#fff" stroke="#333" stroke-width="1"/><path d="M9 6V3M12 6V3M10.500 12.500v3" stroke="#333" stroke-width="1.200"/></svg>
<svg style="left:1227px;top:747px" width="16" height="16" viewBox="0 0 16 16"><path d="M1 15v-3h2.500v3zM4.500 15v-6h2.500v6zM8 15V5.500h2.500V15zM11.500 15V2H14v13z" fill="#eee" stroke="#777" stroke-width=".8"/></svg>
<svg style="left:1251px;top:747px" width="18" height="16" viewBox="0 0 18 16"><path d="M1.500 5.500h3l4.500-4v13l-4.500-4h-3z" fill="#f0f0f0" stroke="#777" stroke-width="1"/><path d="M12 4.500c1.800 2 1.800 5 0 7" fill="none" stroke="#aaa" stroke-width="1.200"/></svg>
<svg style="left:1274px;top:746px" width="18" height="18" viewBox="0 0 18 18"><path d="M5 1l4 2.500-4 2.500-4-2.500zM13 1l4 2.500-4 2.500-4-2.500zM5 6l4 2.500-4 2.500-4-2.500zM13 6l4 2.500-4 2.500-4-2.500zM9 9.500l3.500 2.200-3.500 2.300-3.500-2.300z" fill="#2a8be0" stroke="#1a5aa8" stroke-width=".5"/><circle cx="13.500" cy="13.500" r="3.800" fill="#2aa82a" stroke="#fff" stroke-width=".7"/><path d="M11.500 13.500l1.500 1.500 2.500-3" fill="none" stroke="#fff" stroke-width="1.300"/></svg>
<div class="t" style="left:1306px;top:748px;font-size:12px;letter-spacing:0.2px">21:27</div>
<svg style="left:1347px;top:750px" width="15" height="11" viewBox="0 0 15 11"><defs><linearGradient id="dk" x1="0" y1="0" x2="1" y2="1"><stop offset="0" stop-color="#2a5ad8"/><stop offset="1" stop-color="#5a9af0"/></linearGradient></defs><rect x="0" y="0" width="15" height="11" fill="url(#dk)"/><rect x="0" y="8" width="15" height="3" fill="#223"/><rect x="1" y="8.500" width="3" height="2" fill="#4a4"/></svg>
</div></body></html>
